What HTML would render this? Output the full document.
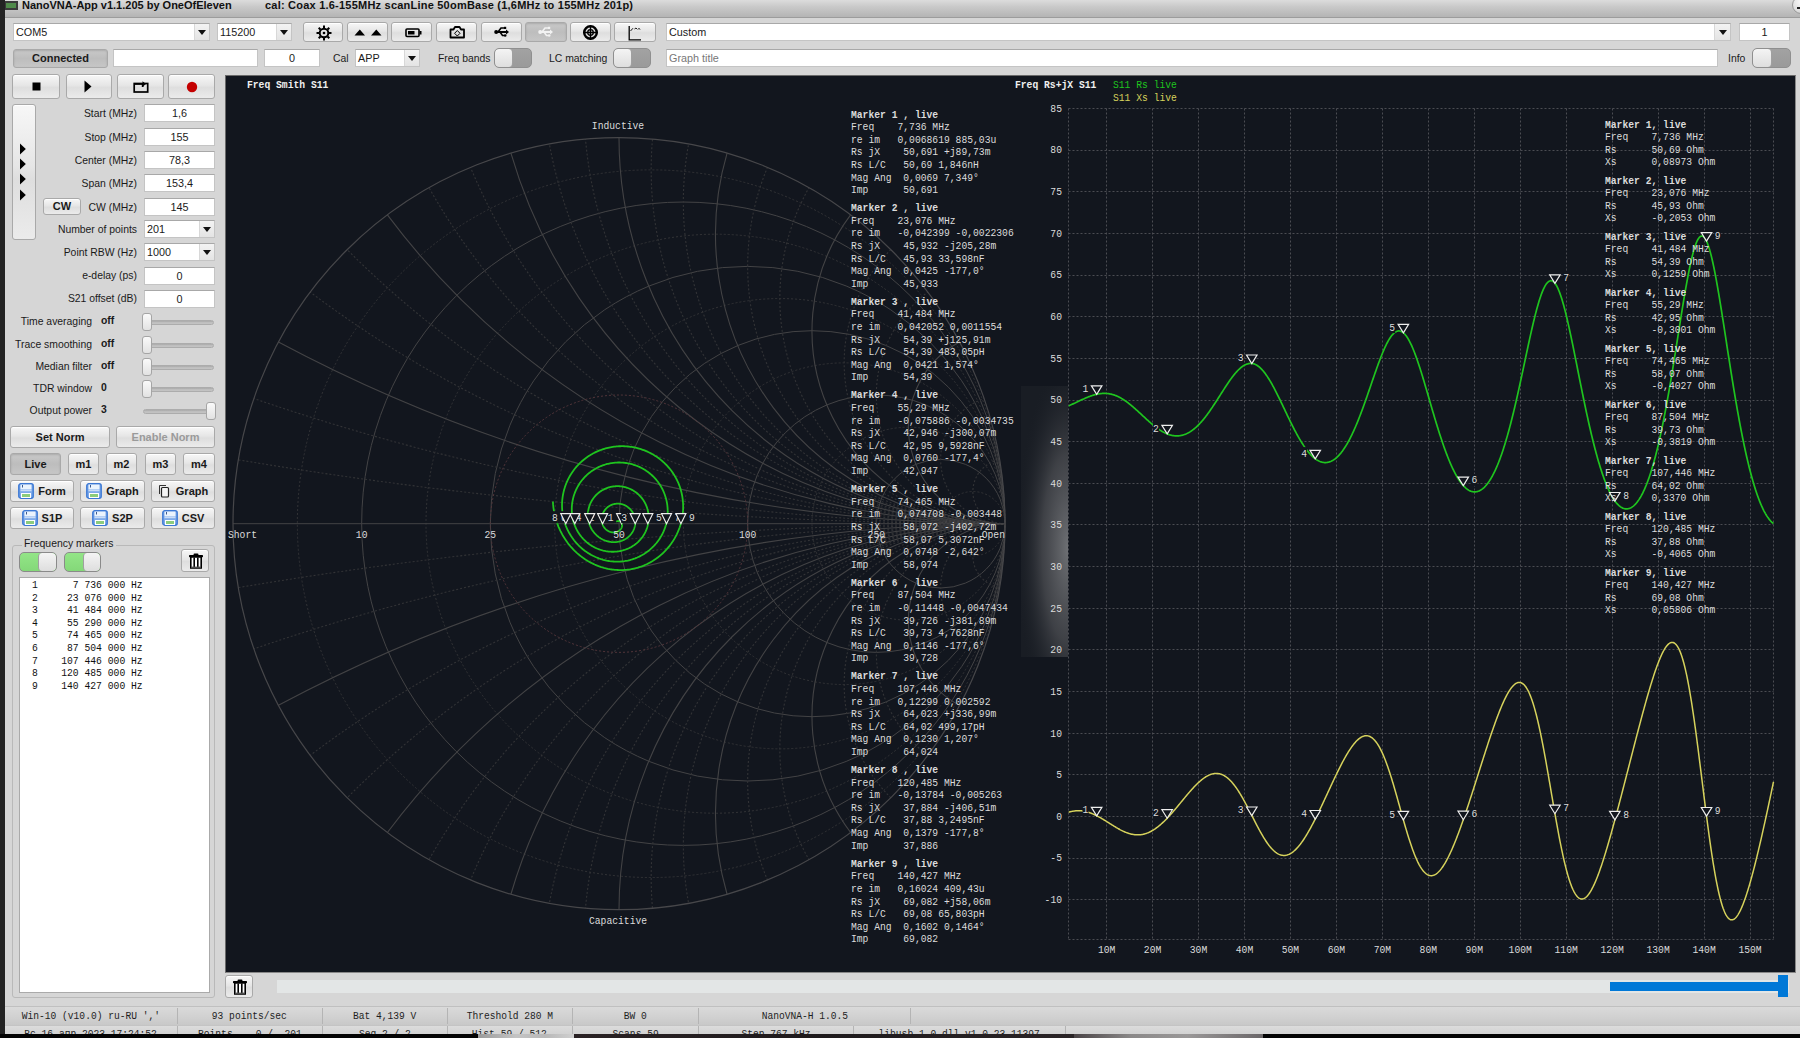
<!DOCTYPE html><html><head><meta charset="utf-8"><style>
*{box-sizing:border-box}
html,body{margin:0;padding:0;width:1800px;height:1038px;overflow:hidden;background:#d6d6d6;font-family:"Liberation Sans",sans-serif;font-size:11px;color:#1a1a1a}
.ab{position:absolute}
.fld{position:absolute;background:#fff;border:1px solid #c4c4c4;border-top-color:#a8a8a8;font-size:10.8px;line-height:16px;white-space:nowrap;overflow:hidden}
.btn{position:absolute;border:1px solid #a9a9a9;border-radius:3px;background:linear-gradient(#f7f7f7,#e6e6e6 45%,#dedede 55%,#ebebeb);box-shadow:inset 0 1px 0 #fff;text-align:center;font-weight:bold;font-size:11px;white-space:nowrap}
.btn.pr{background:linear-gradient(#c9c9c9,#bdbdbd 50%,#c6c6c6);box-shadow:inset 0 1px 2px rgba(0,0,0,.15)}
.lbl{position:absolute;white-space:nowrap;font-size:10.4px;line-height:13px}
.mono{font-family:"Liberation Mono",monospace}
.tg{position:absolute;border:1px solid #8f8f8f;border-radius:5px;background:linear-gradient(#a2a2a2,#9a9a9a);overflow:hidden}
.tg .k{position:absolute;left:0;top:0;bottom:0;width:50%;border-radius:4px;background:linear-gradient(#f4f4f4,#dedede);border-right:1px solid #a0a0a0}
.tg.on{background:linear-gradient(#93e587,#84d879);border-color:#8a8a8a}
.tg.on .k{left:auto;right:0;border-right:none;border-left:1px solid #a0a0a0}
.arr{position:absolute;top:0;bottom:0;border-left:1px solid #d8d8d8;background:linear-gradient(#f3f3f3,#e4e4e4)}
.arr:after{content:"";position:absolute;left:50%;top:50%;margin-left:-4px;margin-top:-2px;border-left:4px solid transparent;border-right:4px solid transparent;border-top:5px solid #111}
.sl{position:absolute;height:5px;border-radius:2.5px;background:linear-gradient(#a8a8a8,#bebebe 50%,#c4c4c4);border:1px solid #acacac}
.slh{position:absolute;width:10px;height:18px;border:1px solid #a5a5a5;border-radius:3px;background:linear-gradient(#fafafa,#e2e2e2)}
</style></head><body><div class="ab" style="left:0;top:0;width:5px;height:1038px;background:#232323"></div><div class="ab" style="left:5px;top:0;width:1795px;height:18px;background:linear-gradient(#dcdcdc,#c9c9c9 40%,#b4b4b4);border-bottom:1px solid #9c9c9c"></div><div class="ab" style="left:5px;top:1px;width:13px;height:9px;background:#4f8a4a;border:2px solid #3a3a3a;border-left-width:1px"></div><div class="lbl" style="left:22px;top:-1px;font-weight:bold;font-size:11px;line-height:13px;color:#111">NanoVNA-App v1.1.205 by OneOfEleven</div><div class="lbl" style="left:265px;top:-1px;font-weight:bold;font-size:11px;letter-spacing:0.22px;line-height:13px;color:#111">cal: Coax 1.6-155MHz scanLine 50omBase (1,6MHz to 155MHz 201p)</div><div class="ab" style="left:1792px;top:-4px;width:18px;height:18px;border-radius:9px;background:radial-gradient(circle at 50% 30%,#fafafa,#d0d0d0);border:1px solid #9a9a9a"></div><div class="ab" style="left:1797px;top:7px;width:4px;height:2px;background:#222"></div><div class="fld" style="left:13px;top:23px;width:197px;height:18px;padding:0 2px;line-height:16px">COM5<div class="arr" style="right:0;width:15px"></div></div><div class="fld" style="left:217px;top:23px;width:75px;height:18px;padding:0 2px;line-height:16px">115200<div class="arr" style="right:0;width:15px"></div></div><div class="btn " style="left:303px;top:22px;width:40px;height:20px;line-height:18px;font-weight:normal"></div><div class="btn " style="left:347px;top:22px;width:41px;height:20px;line-height:18px;font-weight:normal"></div><div class="btn " style="left:391px;top:22px;width:41px;height:20px;line-height:18px;font-weight:normal"></div><div class="btn " style="left:436px;top:22px;width:41px;height:20px;line-height:18px;font-weight:normal"></div><div class="btn " style="left:481px;top:22px;width:41px;height:20px;line-height:18px;font-weight:normal"></div><div class="btn pr" style="left:525px;top:22px;width:42px;height:20px;line-height:18px;font-weight:normal"></div><div class="btn " style="left:570px;top:22px;width:41px;height:20px;line-height:18px;font-weight:normal"></div><div class="btn " style="left:614px;top:22px;width:42px;height:20px;line-height:18px;font-weight:normal"></div><div class="fld" style="left:666px;top:23px;width:1065px;height:18px;padding:0 2px;line-height:16px">Custom<div class="arr" style="right:0;width:16px"></div></div><div class="fld " style="left:1739px;top:23px;width:51px;height:18px;text-align:center;padding:0 2px;line-height:16px;">1</div><div class="btn pr" style="left:13px;top:49px;width:95px;height:19px;line-height:17px;">Connected</div><div class="fld " style="left:113px;top:49px;width:145px;height:18px;text-align:center;padding:0 2px;line-height:16px;"></div><div class="fld " style="left:264px;top:49px;width:56px;height:18px;text-align:center;padding:0 2px;line-height:16px;">0</div><div class="lbl" style="left:333px;top:52px;">Cal</div><div class="fld" style="left:355px;top:49px;width:65px;height:18px;padding:0 2px;line-height:16px">APP<div class="arr" style="right:0;width:15px"></div></div><div class="lbl" style="left:438px;top:52px;">Freq bands</div><div class="tg " style="left:494px;top:48px;width:38px;height:20px"><div class="k"></div></div><div class="lbl" style="left:549px;top:52px;">LC matching</div><div class="tg " style="left:613px;top:48px;width:38px;height:20px"><div class="k"></div></div><div class="fld " style="left:666px;top:49px;width:1052px;height:18px;text-align:left;padding:0 2px;line-height:16px;color:#777">Graph title</div><div class="lbl" style="left:1728px;top:52px;">Info</div><div class="tg " style="left:1752px;top:48px;width:39px;height:20px"><div class="k"></div></div><div class="btn " style="left:12px;top:74px;width:48px;height:25px;line-height:23px;"></div><div class="btn " style="left:66px;top:74px;width:46px;height:25px;line-height:23px;"></div><div class="btn " style="left:117px;top:74px;width:47px;height:25px;line-height:23px;"></div><div class="btn " style="left:168px;top:74px;width:47px;height:25px;line-height:23px;"></div><div class="btn " style="left:12px;top:104px;width:24px;height:136px;line-height:134px;"></div><div class="lbl" style="right:1663px;top:107px;">Start (MHz)</div><div class="fld " style="left:144px;top:104px;width:71px;height:18px;text-align:center;padding:0 2px;line-height:16px;">1,6</div><div class="lbl" style="right:1663px;top:131px;">Stop (MHz)</div><div class="fld " style="left:144px;top:128px;width:71px;height:18px;text-align:center;padding:0 2px;line-height:16px;">155</div><div class="lbl" style="right:1663px;top:154px;">Center (MHz)</div><div class="fld " style="left:144px;top:151px;width:71px;height:18px;text-align:center;padding:0 2px;line-height:16px;">78,3</div><div class="lbl" style="right:1663px;top:177px;">Span (MHz)</div><div class="fld " style="left:144px;top:174px;width:71px;height:18px;text-align:center;padding:0 2px;line-height:16px;">153,4</div><div class="lbl" style="right:1663px;top:201px;">CW (MHz)</div><div class="fld " style="left:144px;top:198px;width:71px;height:18px;text-align:center;padding:0 2px;line-height:16px;">145</div><div class="btn " style="left:43px;top:198px;width:38px;height:17px;line-height:15px;">CW</div><div class="lbl" style="right:1663px;top:223px;">Number of points</div><div class="fld" style="left:144px;top:220px;width:71px;height:18px;padding:0 2px;line-height:16px">201<div class="arr" style="right:0;width:15px"></div></div><div class="lbl" style="right:1663px;top:246px;">Point RBW (Hz)</div><div class="fld" style="left:144px;top:243px;width:71px;height:18px;padding:0 2px;line-height:16px">1000<div class="arr" style="right:0;width:15px"></div></div><div class="lbl" style="right:1663px;top:269px;">e-delay (ps)</div><div class="fld " style="left:144px;top:267px;width:71px;height:18px;text-align:center;padding:0 2px;line-height:16px;">0</div><div class="lbl" style="right:1663px;top:292px;">S21 offset (dB)</div><div class="fld " style="left:144px;top:290px;width:71px;height:18px;text-align:center;padding:0 2px;line-height:16px;">0</div><div class="lbl" style="right:1708px;top:315px;">Time averaging</div><div class="lbl" style="left:101px;top:314px;font-weight:bold">off</div><div class="sl" style="left:143px;top:320px;width:71px"></div><div class="slh" style="left:142px;top:313px"></div><div class="lbl" style="right:1708px;top:338px;">Trace smoothing</div><div class="lbl" style="left:101px;top:337px;font-weight:bold">off</div><div class="sl" style="left:143px;top:343px;width:71px"></div><div class="slh" style="left:142px;top:336px"></div><div class="lbl" style="right:1708px;top:360px;">Median filter</div><div class="lbl" style="left:101px;top:359px;font-weight:bold">off</div><div class="sl" style="left:143px;top:365px;width:71px"></div><div class="slh" style="left:142px;top:358px"></div><div class="lbl" style="right:1708px;top:382px;">TDR window</div><div class="lbl" style="left:101px;top:381px;font-weight:bold">0</div><div class="sl" style="left:143px;top:387px;width:71px"></div><div class="slh" style="left:142px;top:380px"></div><div class="lbl" style="right:1708px;top:404px;">Output power</div><div class="lbl" style="left:101px;top:403px;font-weight:bold">3</div><div class="sl" style="left:143px;top:409px;width:71px"></div><div class="slh" style="left:206px;top:402px"></div><div class="btn " style="left:10px;top:426px;width:100px;height:22px;line-height:20px;">Set Norm</div><div class="btn " style="left:116px;top:426px;width:99px;height:22px;line-height:20px;color:#9a9a9a">Enable Norm</div><div class="btn pr" style="left:10px;top:453px;width:51px;height:22px;line-height:20px;">Live</div><div class="btn " style="left:68px;top:453px;width:31px;height:22px;line-height:20px;">m1</div><div class="btn " style="left:106px;top:453px;width:31px;height:22px;line-height:20px;">m2</div><div class="btn " style="left:145px;top:453px;width:31px;height:22px;line-height:20px;">m3</div><div class="btn " style="left:183px;top:453px;width:32px;height:22px;line-height:20px;">m4</div><div class="btn " style="left:10px;top:480px;width:64px;height:22px;line-height:20px;"><svg width="16" height="16" viewBox="0 0 16 16" style="vertical-align:middle;position:relative;top:-1px;margin-right:4px"><rect x="0.8" y="0.8" width="14.4" height="14.4" rx="2" fill="#7eaaea" stroke="#3b78d4" stroke-width="1.4"/><rect x="2.5" y="1.5" width="11" height="5" fill="#eaf3fd"/><rect x="4" y="2" width="1" height="2.5" fill="#3b5a90"/><rect x="2.5" y="7" width="11" height="1.2" fill="#c8dcf6"/><rect x="3" y="10" width="10" height="5" fill="#fff"/><rect x="4" y="11" width="8" height="3" fill="#8ccc7c"/></svg>Form</div><div class="btn " style="left:80px;top:480px;width:65px;height:22px;line-height:20px;"><svg width="16" height="16" viewBox="0 0 16 16" style="vertical-align:middle;position:relative;top:-1px;margin-right:4px"><rect x="0.8" y="0.8" width="14.4" height="14.4" rx="2" fill="#7eaaea" stroke="#3b78d4" stroke-width="1.4"/><rect x="2.5" y="1.5" width="11" height="5" fill="#eaf3fd"/><rect x="4" y="2" width="1" height="2.5" fill="#3b5a90"/><rect x="2.5" y="7" width="11" height="1.2" fill="#c8dcf6"/><rect x="3" y="10" width="10" height="5" fill="#fff"/><rect x="4" y="11" width="8" height="3" fill="#8ccc7c"/></svg>Graph</div><div class="btn " style="left:151px;top:480px;width:64px;height:22px;line-height:20px;"><svg width="12" height="14" viewBox="0 0 12 14" style="vertical-align:middle;position:relative;top:-1px;margin-right:6px"><path d="M1.5,10 V1.5 H8" fill="none" stroke="#333" stroke-width="1"/><rect x="3.5" y="3.5" width="7" height="9.5" rx="1" fill="#f4f4f4" stroke="#222" stroke-width="1.2"/></svg>Graph</div><div class="btn " style="left:10px;top:507px;width:64px;height:22px;line-height:20px;"><svg width="16" height="16" viewBox="0 0 16 16" style="vertical-align:middle;position:relative;top:-1px;margin-right:4px"><rect x="0.8" y="0.8" width="14.4" height="14.4" rx="2" fill="#7eaaea" stroke="#3b78d4" stroke-width="1.4"/><rect x="2.5" y="1.5" width="11" height="5" fill="#eaf3fd"/><rect x="4" y="2" width="1" height="2.5" fill="#3b5a90"/><rect x="2.5" y="7" width="11" height="1.2" fill="#c8dcf6"/><rect x="3" y="10" width="10" height="5" fill="#fff"/><rect x="4" y="11" width="8" height="3" fill="#8ccc7c"/></svg>S1P</div><div class="btn " style="left:80px;top:507px;width:65px;height:22px;line-height:20px;"><svg width="16" height="16" viewBox="0 0 16 16" style="vertical-align:middle;position:relative;top:-1px;margin-right:4px"><rect x="0.8" y="0.8" width="14.4" height="14.4" rx="2" fill="#7eaaea" stroke="#3b78d4" stroke-width="1.4"/><rect x="2.5" y="1.5" width="11" height="5" fill="#eaf3fd"/><rect x="4" y="2" width="1" height="2.5" fill="#3b5a90"/><rect x="2.5" y="7" width="11" height="1.2" fill="#c8dcf6"/><rect x="3" y="10" width="10" height="5" fill="#fff"/><rect x="4" y="11" width="8" height="3" fill="#8ccc7c"/></svg>S2P</div><div class="btn " style="left:151px;top:507px;width:64px;height:22px;line-height:20px;"><svg width="16" height="16" viewBox="0 0 16 16" style="vertical-align:middle;position:relative;top:-1px;margin-right:4px"><rect x="0.8" y="0.8" width="14.4" height="14.4" rx="2" fill="#7eaaea" stroke="#3b78d4" stroke-width="1.4"/><rect x="2.5" y="1.5" width="11" height="5" fill="#eaf3fd"/><rect x="4" y="2" width="1" height="2.5" fill="#3b5a90"/><rect x="2.5" y="7" width="11" height="1.2" fill="#c8dcf6"/><rect x="3" y="10" width="10" height="5" fill="#fff"/><rect x="4" y="11" width="8" height="3" fill="#8ccc7c"/></svg>CSV</div><div class="ab" style="left:12px;top:545px;width:203px;height:453px;border:1px solid #b9b9b9;border-radius:3px"></div><div class="lbl" style="left:22px;top:537px;padding:0 2px;background:#d6d6d6">Frequency markers</div><div class="tg on" style="left:19px;top:552px;width:38px;height:20px"><div class="k"></div></div><div class="tg on" style="left:64px;top:552px;width:37px;height:20px"><div class="k"></div></div><div class="btn " style="left:181px;top:549px;width:28px;height:23px;line-height:21px;"><div style="position:absolute;left:6px;top:3px;line-height:0"><svg width="16" height="16" viewBox="0 0 16 16"><rect x="5.5" y="0.5" width="5" height="2" rx="1" fill="#000"/><rect x="1" y="2" width="14" height="2.2" rx="0.6" fill="#000"/><path d="M2.8,4 H13.2 V15 H2.8Z" fill="#fff" stroke="#000" stroke-width="1.6"/><path d="M6.2,4.5 V14.5 M9.8,4.5 V14.5" stroke="#000" stroke-width="1.6"/><path d="M3,14.2 H13" stroke="#555" stroke-width="1.2"/></svg></div></div><div class="ab" style="left:19px;top:577px;width:191px;height:416px;background:#fff;border:1px solid #aaa"></div><div style="position:absolute;left:32px;top:579.0px;font-family:'Liberation Mono',monospace;font-size:11.1px;line-height:12.6px;white-space:pre;color:#111;transform:scaleX(0.875);transform-origin:0 50%">1      7 736 000 Hz</div><div style="position:absolute;left:32px;top:591.6px;font-family:'Liberation Mono',monospace;font-size:11.1px;line-height:12.6px;white-space:pre;color:#111;transform:scaleX(0.875);transform-origin:0 50%">2     23 076 000 Hz</div><div style="position:absolute;left:32px;top:604.2px;font-family:'Liberation Mono',monospace;font-size:11.1px;line-height:12.6px;white-space:pre;color:#111;transform:scaleX(0.875);transform-origin:0 50%">3     41 484 000 Hz</div><div style="position:absolute;left:32px;top:616.8px;font-family:'Liberation Mono',monospace;font-size:11.1px;line-height:12.6px;white-space:pre;color:#111;transform:scaleX(0.875);transform-origin:0 50%">4     55 290 000 Hz</div><div style="position:absolute;left:32px;top:629.4px;font-family:'Liberation Mono',monospace;font-size:11.1px;line-height:12.6px;white-space:pre;color:#111;transform:scaleX(0.875);transform-origin:0 50%">5     74 465 000 Hz</div><div style="position:absolute;left:32px;top:642.0px;font-family:'Liberation Mono',monospace;font-size:11.1px;line-height:12.6px;white-space:pre;color:#111;transform:scaleX(0.875);transform-origin:0 50%">6     87 504 000 Hz</div><div style="position:absolute;left:32px;top:654.6px;font-family:'Liberation Mono',monospace;font-size:11.1px;line-height:12.6px;white-space:pre;color:#111;transform:scaleX(0.875);transform-origin:0 50%">7    107 446 000 Hz</div><div style="position:absolute;left:32px;top:667.2px;font-family:'Liberation Mono',monospace;font-size:11.1px;line-height:12.6px;white-space:pre;color:#111;transform:scaleX(0.875);transform-origin:0 50%">8    120 485 000 Hz</div><div style="position:absolute;left:32px;top:679.8px;font-family:'Liberation Mono',monospace;font-size:11.1px;line-height:12.6px;white-space:pre;color:#111;transform:scaleX(0.875);transform-origin:0 50%">9    140 427 000 Hz</div><svg class="ab" style="left:315.5px;top:25px" width="16" height="16" viewBox="0 0 16 16"><line x1="13.00" y1="8.00" x2="15.50" y2="8.00" stroke="#000" stroke-width="2"/><line x1="11.54" y1="11.54" x2="13.30" y2="13.30" stroke="#000" stroke-width="2"/><line x1="8.00" y1="13.00" x2="8.00" y2="15.50" stroke="#000" stroke-width="2"/><line x1="4.46" y1="11.54" x2="2.70" y2="13.30" stroke="#000" stroke-width="2"/><line x1="3.00" y1="8.00" x2="0.50" y2="8.00" stroke="#000" stroke-width="2"/><line x1="4.46" y1="4.46" x2="2.70" y2="2.70" stroke="#000" stroke-width="2"/><line x1="8.00" y1="3.00" x2="8.00" y2="0.50" stroke="#000" stroke-width="2"/><line x1="11.54" y1="4.46" x2="13.30" y2="2.70" stroke="#000" stroke-width="2"/><circle cx="8" cy="8" r="4.3" fill="none" stroke="#000" stroke-width="2"/><circle cx="8" cy="8" r="1.3" fill="#000"/></svg><svg class="ab" style="left:354px;top:28px" width="30" height="8" viewBox="0 0 30 8"><path d="M0.5,7.5 L5.8,1.5 L11,7.5Z M17,7.5 L22.3,1.5 L27.5,7.5Z" fill="#000"/></svg><svg class="ab" style="left:405px;top:28px" width="18" height="10" viewBox="0 0 18 10"><rect x="1" y="1" width="13" height="7.5" rx="1" fill="none" stroke="#000" stroke-width="1.6"/><rect x="3" y="3" width="6.5" height="3.5" fill="#000"/><rect x="14.5" y="3" width="2" height="3.5" fill="#000"/></svg><svg class="ab" style="left:449px;top:25px" width="17" height="14" viewBox="0 0 17 14"><path d="M1.5,4.5 H4.5 L6,2 H10.5 L12,4.5 H15 V12.5 H1.5Z" fill="none" stroke="#000" stroke-width="1.8" stroke-linejoin="round"/><path d="M8.3,5.5 L11,8.3 L8.3,11 L5.6,8.3Z" fill="none" stroke="#000" stroke-width="1"/></svg><svg class="ab" style="left:494px;top:25px" width="16" height="14" viewBox="0 0 16 14"><path d="M1,7 H13" stroke="#000" stroke-width="2"/><circle cx="2.2" cy="7" r="2" fill="#000"/><path d="M4,7 L7,3 H10" fill="none" stroke="#000" stroke-width="1.6"/><path d="M6,7 L8.5,10.5 H10.5" fill="none" stroke="#000" stroke-width="1.6"/><path d="M12,4.5 L15,7 L12,9.5Z" fill="#000"/><rect x="10" y="1.8" width="2.2" height="2.2" fill="#000"/><circle cx="11.2" cy="10.5" r="1.3" fill="#000"/></svg><svg class="ab" style="left:538px;top:25px" width="16" height="14" viewBox="0 0 16 14"><path d="M1,7 H13" stroke="#f2f2f2" stroke-width="2"/><circle cx="2.2" cy="7" r="2" fill="#f2f2f2"/><path d="M4,7 L7,3 H10" fill="none" stroke="#f2f2f2" stroke-width="1.6"/><path d="M6,7 L8.5,10.5 H10.5" fill="none" stroke="#f2f2f2" stroke-width="1.6"/><path d="M12,4.5 L15,7 L12,9.5Z" fill="#f2f2f2"/><rect x="10" y="1.8" width="2.2" height="2.2" fill="#f2f2f2"/><circle cx="11.2" cy="10.5" r="1.3" fill="#f2f2f2"/></svg><svg class="ab" style="left:582px;top:24px" width="17" height="17" viewBox="0 0 17 17"><circle cx="8.5" cy="8.5" r="6.3" fill="none" stroke="#000" stroke-width="2.4"/><circle cx="8.5" cy="8.5" r="2.8" fill="none" stroke="#000" stroke-width="1.3"/><path d="M8.5,1 V16 M1,8.5 H16" stroke="#000" stroke-width="1.4"/></svg><svg class="ab" style="left:627px;top:25px" width="16" height="16" viewBox="0 0 16 16"><path d="M2.2,1 V14.8 H14" fill="none" stroke="#000" stroke-width="1.3"/><path d="M3.5,6 L6,3.2 M7.5,4 L9,3 L10,4 M10.8,4.6 L12,3.3 L13,4.6" fill="none" stroke="#000" stroke-width="0.9"/></svg><svg class="ab" style="left:32px;top:82px" width="9" height="9" viewBox="0 0 9 9"><rect x="0.5" y="0.5" width="8" height="8" fill="#000"/></svg><svg class="ab" style="left:84px;top:80px" width="8" height="13" viewBox="0 0 8 13"><path d="M0.5,0.5 L7.5,6.5 L0.5,12.5Z" fill="#000"/></svg><svg class="ab" style="left:133px;top:81px" width="16" height="12" viewBox="0 0 16 12"><rect x="1.2" y="2.5" width="13.5" height="8.5" fill="none" stroke="#000" stroke-width="1.7"/><path d="M1,3 H10" stroke="#000" stroke-width="1.7"/><path d="M9.5,0.3 L13,3 L9.5,5.7Z" fill="#000"/><rect x="8.8" y="3" width="1.8" height="3" fill="#000"/></svg><svg class="ab" style="left:186px;top:81px" width="12" height="12" viewBox="0 0 12 12"><circle cx="6" cy="6" r="5.2" fill="#c40000"/></svg><svg class="ab" style="left:19px;top:143px" width="8" height="12" viewBox="0 0 8 12"><path d="M1,0.5 L6.8,6 L1,11.5Z" fill="#000"/></svg><svg class="ab" style="left:19px;top:158px" width="8" height="12" viewBox="0 0 8 12"><path d="M1,0.5 L6.8,6 L1,11.5Z" fill="#000"/></svg><svg class="ab" style="left:19px;top:173px" width="8" height="12" viewBox="0 0 8 12"><path d="M1,0.5 L6.8,6 L1,11.5Z" fill="#000"/></svg><svg class="ab" style="left:19px;top:189px" width="8" height="12" viewBox="0 0 8 12"><path d="M1,0.5 L6.8,6 L1,11.5Z" fill="#000"/></svg><div class="ab" style="left:225px;top:75px;width:1571px;height:898px;background:#12161e;border:1px solid #6a6a6a;border-right-color:#888;border-bottom-color:#888"></div><div class="btn " style="left:225px;top:975px;width:28px;height:23px;line-height:21px;"><div style="position:absolute;left:6px;top:3px;line-height:0"><svg width="16" height="16" viewBox="0 0 16 16"><rect x="5.5" y="0.5" width="5" height="2" rx="1" fill="#000"/><rect x="1" y="2" width="14" height="2.2" rx="0.6" fill="#000"/><path d="M2.8,4 H13.2 V15 H2.8Z" fill="#fff" stroke="#000" stroke-width="1.6"/><path d="M6.2,4.5 V14.5 M9.8,4.5 V14.5" stroke="#000" stroke-width="1.6"/><path d="M3,14.2 H13" stroke="#555" stroke-width="1.2"/></svg></div></div><div class="ab" style="left:277px;top:980px;width:1512px;height:13px;background:#e3e6e6"></div><div class="ab" style="left:1610px;top:982px;width:170px;height:9px;background:#0078d7"></div><div class="ab" style="left:1778px;top:975px;width:10px;height:22px;background:#0078d7"></div><div class="ab" style="left:5px;top:1006px;width:1795px;height:19px;background:linear-gradient(#dadada,#d0d0d0 60%,#c8c8c8);border-top:1px solid #c0c0c0"></div><div class="ab" style="left:5px;top:1025px;width:1795px;height:9px;background:linear-gradient(#dcdcdc,#d2d2d2);border-top:1px solid #c4c4c4"></div><div class="ab mono" style="left:5px;top:1008px;width:172.5px;height:16px;text-align:center;font-size:11.1px;line-height:16px;color:#1e1e1e;border-right:1px solid #b4b4b4;white-space:pre"><span style="display:inline-block;transform:scaleX(0.865)">Win-10 (v10.0) ru-RU ','</span></div><div class="ab mono" style="left:177.5px;top:1008px;width:145.0px;height:16px;text-align:center;font-size:11.1px;line-height:16px;color:#1e1e1e;border-right:1px solid #b4b4b4;white-space:pre"><span style="display:inline-block;transform:scaleX(0.865)">93 points/sec</span></div><div class="ab mono" style="left:322.5px;top:1008px;width:125.0px;height:16px;text-align:center;font-size:11.1px;line-height:16px;color:#1e1e1e;border-right:1px solid #b4b4b4;white-space:pre"><span style="display:inline-block;transform:scaleX(0.865)">Bat 4,139 V</span></div><div class="ab mono" style="left:447.5px;top:1008px;width:125.5px;height:16px;text-align:center;font-size:11.1px;line-height:16px;color:#1e1e1e;border-right:1px solid #b4b4b4;white-space:pre"><span style="display:inline-block;transform:scaleX(0.865)">Threshold 280 M</span></div><div class="ab mono" style="left:573px;top:1008px;width:126px;height:16px;text-align:center;font-size:11.1px;line-height:16px;color:#1e1e1e;border-right:1px solid #b4b4b4;white-space:pre"><span style="display:inline-block;transform:scaleX(0.865)">BW 0</span></div><div class="ab mono" style="left:699px;top:1008px;width:212px;height:16px;text-align:center;font-size:11.1px;line-height:16px;color:#1e1e1e;border-right:1px solid #b4b4b4;white-space:pre"><span style="display:inline-block;transform:scaleX(0.865)">NanoVNA-H 1.0.5</span></div><div class="ab mono" style="left:5px;top:1026px;width:172.5px;height:8px;text-align:center;font-size:11.1px;line-height:16px;color:#1e1e1e;border-right:1px solid #b4b4b4;white-space:pre;overflow:hidden"><span style="display:inline-block;transform:scaleX(0.865)">Вс 16 апр 2023 17:24:52</span></div><div class="ab mono" style="left:177.5px;top:1026px;width:145.0px;height:8px;text-align:center;font-size:11.1px;line-height:16px;color:#1e1e1e;border-right:1px solid #b4b4b4;white-space:pre;overflow:hidden"><span style="display:inline-block;transform:scaleX(0.865)">Points    0 /  201</span></div><div class="ab mono" style="left:322.5px;top:1026px;width:125.0px;height:8px;text-align:center;font-size:11.1px;line-height:16px;color:#1e1e1e;border-right:1px solid #b4b4b4;white-space:pre;overflow:hidden"><span style="display:inline-block;transform:scaleX(0.865)">Seg 2 / 2</span></div><div class="ab mono" style="left:447.5px;top:1026px;width:125.5px;height:8px;text-align:center;font-size:11.1px;line-height:16px;color:#1e1e1e;border-right:1px solid #b4b4b4;white-space:pre;overflow:hidden"><span style="display:inline-block;transform:scaleX(0.865)">Hist 59 / 512</span></div><div class="ab mono" style="left:573px;top:1026px;width:126px;height:8px;text-align:center;font-size:11.1px;line-height:16px;color:#1e1e1e;border-right:1px solid #b4b4b4;white-space:pre;overflow:hidden"><span style="display:inline-block;transform:scaleX(0.865)">Scans 59</span></div><div class="ab mono" style="left:699px;top:1026px;width:155px;height:8px;text-align:center;font-size:11.1px;line-height:16px;color:#1e1e1e;border-right:1px solid #b4b4b4;white-space:pre;overflow:hidden"><span style="display:inline-block;transform:scaleX(0.865)">Step 767 kHz</span></div><div class="ab mono" style="left:854px;top:1026px;width:212px;height:8px;text-align:center;font-size:11.1px;line-height:16px;color:#1e1e1e;border-right:1px solid #b4b4b4;white-space:pre;overflow:hidden"><span style="display:inline-block;transform:scaleX(0.865)">libusb 1.0.dll v1.0.23.11397</span></div><div class="ab" style="left:0;top:1034px;width:1800px;height:4px;background:#030303"></div><div class="ab" style="left:478px;top:1034px;width:96px;height:4px;background:linear-gradient(90deg,#9a9a9a,#c4c4c4 40%,#b8b8b8 70%,#d0d0d0)"></div><div class="ab" style="left:574px;top:1034px;width:500px;height:4px;background:linear-gradient(90deg,#2a2224,#1e1a1c 50%,#2a2426)"></div><div class="ab" style="left:1074px;top:1034px;width:189px;height:4px;background:linear-gradient(90deg,#4a4446,#8a8888 30%,#9a9898 60%,#6a6668)"></div><svg class="ab" style="left:226px;top:76px" width="1569" height="896" viewBox="226 76 1569 896" font-family="Liberation Mono, monospace"><circle cx="651.17" cy="523.70" r="353.83" fill="none" stroke="#323336" stroke-width="1" stroke-dasharray="2 2"/><circle cx="683.33" cy="523.70" r="321.67" fill="none" stroke="#434345" stroke-width="1" /><circle cx="715.50" cy="523.70" r="289.50" fill="none" stroke="#323336" stroke-width="1" stroke-dasharray="2 2"/><circle cx="747.67" cy="523.70" r="257.33" fill="none" stroke="#434345" stroke-width="1" /><circle cx="779.83" cy="523.70" r="225.17" fill="none" stroke="#323336" stroke-width="1" stroke-dasharray="2 2"/><circle cx="812.00" cy="523.70" r="193.00" fill="none" stroke="#434345" stroke-width="1" /><circle cx="844.17" cy="523.70" r="160.83" fill="none" stroke="#323336" stroke-width="1" stroke-dasharray="2 2"/><circle cx="876.33" cy="523.70" r="128.67" fill="none" stroke="#434345" stroke-width="1" /><circle cx="908.50" cy="523.70" r="96.50" fill="none" stroke="#323336" stroke-width="1" stroke-dasharray="2 2"/><circle cx="940.67" cy="523.70" r="64.33" fill="none" stroke="#434345" stroke-width="1" /><circle cx="972.83" cy="523.70" r="32.17" fill="none" stroke="#323336" stroke-width="1" stroke-dasharray="2 2"/><path d="M1005.00,523.70 A4632.00,4632.00 0 0 1 238.32,459.81" fill="none" stroke="#323336" stroke-width="1.1" stroke-dasharray="2 2"/><path d="M1005.00,523.70 A4632.00,4632.00 0 0 0 238.32,587.59" fill="none" stroke="#323336" stroke-width="1.1" stroke-dasharray="2 2"/><path d="M1005.00,523.70 A2316.00,2316.00 0 0 1 253.86,398.51" fill="none" stroke="#323336" stroke-width="1.1" stroke-dasharray="2 2"/><path d="M1005.00,523.70 A2316.00,2316.00 0 0 0 253.86,648.89" fill="none" stroke="#323336" stroke-width="1.1" stroke-dasharray="2 2"/><path d="M1005.00,523.70 A1544.00,1544.00 0 0 1 278.41,342.05" fill="none" stroke="#434345" stroke-width="1.1" /><path d="M1005.00,523.70 A1544.00,1544.00 0 0 0 278.41,705.35" fill="none" stroke="#434345" stroke-width="1.1" /><path d="M1005.00,523.70 A1158.00,1158.00 0 0 1 310.20,292.10" fill="none" stroke="#323336" stroke-width="1.1" stroke-dasharray="2 2"/><path d="M1005.00,523.70 A1158.00,1158.00 0 0 0 310.20,755.30" fill="none" stroke="#323336" stroke-width="1.1" stroke-dasharray="2 2"/><path d="M1005.00,523.70 A926.40,926.40 0 0 1 347.20,249.62" fill="none" stroke="#323336" stroke-width="1.1" stroke-dasharray="2 2"/><path d="M1005.00,523.70 A926.40,926.40 0 0 0 347.20,797.78" fill="none" stroke="#323336" stroke-width="1.1" stroke-dasharray="2 2"/><path d="M1005.00,523.70 A772.00,772.00 0 0 1 387.40,214.90" fill="none" stroke="#434345" stroke-width="1.1" /><path d="M1005.00,523.70 A772.00,772.00 0 0 0 387.40,832.50" fill="none" stroke="#434345" stroke-width="1.1" /><path d="M1005.00,523.70 A661.71,661.71 0 0 1 429.00,187.70" fill="none" stroke="#323336" stroke-width="1.1" stroke-dasharray="2 2"/><path d="M1005.00,523.70 A661.71,661.71 0 0 0 429.00,859.70" fill="none" stroke="#323336" stroke-width="1.1" stroke-dasharray="2 2"/><path d="M1005.00,523.70 A579.00,579.00 0 0 1 470.54,167.39" fill="none" stroke="#323336" stroke-width="1.1" stroke-dasharray="2 2"/><path d="M1005.00,523.70 A579.00,579.00 0 0 0 470.54,880.01" fill="none" stroke="#323336" stroke-width="1.1" stroke-dasharray="2 2"/><path d="M1005.00,523.70 A514.67,514.67 0 0 1 510.92,153.14" fill="none" stroke="#434345" stroke-width="1.1" /><path d="M1005.00,523.70 A514.67,514.67 0 0 0 510.92,894.26" fill="none" stroke="#434345" stroke-width="1.1" /><path d="M1005.00,523.70 A463.20,463.20 0 0 1 549.39,144.03" fill="none" stroke="#323336" stroke-width="1.1" stroke-dasharray="2 2"/><path d="M1005.00,523.70 A463.20,463.20 0 0 0 549.39,903.37" fill="none" stroke="#323336" stroke-width="1.1" stroke-dasharray="2 2"/><path d="M1005.00,523.70 A421.09,421.09 0 0 1 585.50,139.16" fill="none" stroke="#323336" stroke-width="1.1" stroke-dasharray="2 2"/><path d="M1005.00,523.70 A421.09,421.09 0 0 0 585.50,908.24" fill="none" stroke="#323336" stroke-width="1.1" stroke-dasharray="2 2"/><path d="M1005.00,523.70 A386.00,386.00 0 0 1 619.00,137.70" fill="none" stroke="#434345" stroke-width="1.1" /><path d="M1005.00,523.70 A386.00,386.00 0 0 0 619.00,909.70" fill="none" stroke="#434345" stroke-width="1.1" /><path d="M1005.00,523.70 A353.83,353.83 0 0 1 652.50,139.16" fill="none" stroke="#323336" stroke-width="1.1" stroke-dasharray="2 2"/><path d="M1005.00,523.70 A353.83,353.83 0 0 0 652.50,908.24" fill="none" stroke="#323336" stroke-width="1.1" stroke-dasharray="2 2"/><path d="M1005.00,523.70 A321.67,321.67 0 0 1 688.61,144.03" fill="none" stroke="#323336" stroke-width="1.1" stroke-dasharray="2 2"/><path d="M1005.00,523.70 A321.67,321.67 0 0 0 688.61,903.37" fill="none" stroke="#323336" stroke-width="1.1" stroke-dasharray="2 2"/><path d="M1005.00,523.70 A289.50,289.50 0 0 1 727.08,153.14" fill="none" stroke="#434345" stroke-width="1.1" /><path d="M1005.00,523.70 A289.50,289.50 0 0 0 727.08,894.26" fill="none" stroke="#434345" stroke-width="1.1" /><path d="M1005.00,523.70 A257.33,257.33 0 0 1 767.46,167.39" fill="none" stroke="#323336" stroke-width="1.1" stroke-dasharray="2 2"/><path d="M1005.00,523.70 A257.33,257.33 0 0 0 767.46,880.01" fill="none" stroke="#323336" stroke-width="1.1" stroke-dasharray="2 2"/><path d="M1005.00,523.70 A225.17,225.17 0 0 1 809.00,187.70" fill="none" stroke="#323336" stroke-width="1.1" stroke-dasharray="2 2"/><path d="M1005.00,523.70 A225.17,225.17 0 0 0 809.00,859.70" fill="none" stroke="#323336" stroke-width="1.1" stroke-dasharray="2 2"/><path d="M1005.00,523.70 A193.00,193.00 0 0 1 850.60,214.90" fill="none" stroke="#434345" stroke-width="1.1" /><path d="M1005.00,523.70 A193.00,193.00 0 0 0 850.60,832.50" fill="none" stroke="#434345" stroke-width="1.1" /><path d="M1005.00,523.70 A160.83,160.83 0 0 1 890.80,249.62" fill="none" stroke="#323336" stroke-width="1.1" stroke-dasharray="2 2"/><path d="M1005.00,523.70 A160.83,160.83 0 0 0 890.80,797.78" fill="none" stroke="#323336" stroke-width="1.1" stroke-dasharray="2 2"/><path d="M1005.00,523.70 A128.67,128.67 0 0 1 927.80,292.10" fill="none" stroke="#323336" stroke-width="1.1" stroke-dasharray="2 2"/><path d="M1005.00,523.70 A128.67,128.67 0 0 0 927.80,755.30" fill="none" stroke="#323336" stroke-width="1.1" stroke-dasharray="2 2"/><path d="M1005.00,523.70 A96.50,96.50 0 0 1 959.59,342.05" fill="none" stroke="#434345" stroke-width="1.1" /><path d="M1005.00,523.70 A96.50,96.50 0 0 0 959.59,705.35" fill="none" stroke="#434345" stroke-width="1.1" /><path d="M1005.00,523.70 A64.33,64.33 0 0 1 984.14,398.51" fill="none" stroke="#323336" stroke-width="1.1" stroke-dasharray="2 2"/><path d="M1005.00,523.70 A64.33,64.33 0 0 0 984.14,648.89" fill="none" stroke="#323336" stroke-width="1.1" stroke-dasharray="2 2"/><path d="M1005.00,523.70 A32.17,32.17 0 0 1 999.68,459.81" fill="none" stroke="#323336" stroke-width="1.1" stroke-dasharray="2 2"/><path d="M1005.00,523.70 A32.17,32.17 0 0 0 999.68,587.59" fill="none" stroke="#323336" stroke-width="1.1" stroke-dasharray="2 2"/><line x1="233.0" y1="523.7" x2="1005.0" y2="523.7" stroke="#434345" stroke-width="1"/><circle cx="619.0" cy="523.7" r="386.0" fill="none" stroke="#47474a" stroke-width="1.2"/><circle cx="619.0" cy="523.7" r="128.67" fill="none" stroke="#53353a" stroke-width="1" stroke-dasharray="2 2"/><polyline points="616.27,521.68 616.38,521.62 616.48,521.56 616.59,521.50 616.69,521.45 616.80,521.40 616.91,521.35 617.02,521.30 617.13,521.26 617.24,521.22 617.35,521.18 617.46,521.15 617.57,521.12 617.68,521.09 617.79,521.07 617.90,521.05 618.01,521.03 618.12,521.02 618.23,521.01 618.34,521.01 618.46,521.00 618.57,521.01 618.68,521.01 618.78,521.03 618.89,521.04 619.00,521.06 619.11,521.08 619.22,521.11 619.32,521.14 619.43,521.17 619.53,521.21 619.63,521.25 619.74,521.30 619.84,521.35 619.94,521.40 620.03,521.46 620.13,521.52 620.23,521.58 620.32,521.65 620.41,521.72 620.50,521.79 620.59,521.87 620.68,521.95 620.76,522.03 620.84,522.12 620.92,522.21 621.00,522.30 621.08,522.40 621.15,522.49 621.22,522.59 621.29,522.70 621.36,522.80 621.42,522.91 621.48,523.02 621.54,523.13 621.60,523.25 621.65,523.36 621.70,523.48 621.75,523.60 621.79,523.72 621.84,523.85 621.87,523.98 621.91,524.10 621.94,524.23 621.97,524.36 621.99,524.50 622.02,524.63 622.03,524.77 622.05,524.90 622.06,525.04 622.07,525.18 622.07,525.32 622.07,525.46 622.07,525.60 622.06,525.74 622.05,525.89 622.04,526.03 622.02,526.18 622.00,526.32 621.97,526.47 621.94,526.61 621.90,526.76 621.86,526.90 621.82,527.05 621.78,527.20 621.73,527.34 621.67,527.49 621.61,527.63 621.55,527.78 621.48,527.92 621.41,528.07 621.34,528.21 621.26,528.35 621.18,528.49 621.09,528.63 621.00,528.77 620.90,528.91 620.80,529.05 620.70,529.18 620.60,529.32 620.49,529.45 620.37,529.58 620.25,529.71 620.13,529.84 620.01,529.96 619.88,530.09 619.74,530.21 619.61,530.33 619.47,530.44 619.32,530.56 619.18,530.67 619.02,530.78 618.87,530.88 618.71,530.99 618.55,531.09 618.39,531.19 618.22,531.28 618.05,531.37 617.88,531.46 617.70,531.55 617.52,531.63 617.34,531.71 617.15,531.78 616.96,531.85 616.77,531.92 616.58,531.99 616.38,532.05 616.19,532.10 615.99,532.15 615.78,532.20 615.58,532.25 615.37,532.29 615.16,532.32 614.95,532.35 614.74,532.38 614.52,532.40 614.31,532.42 614.09,532.43 613.87,532.44 613.65,532.45 613.43,532.45 613.20,532.44 612.98,532.43 612.76,532.41 612.53,532.39 612.30,532.37 612.08,532.34 611.85,532.31 611.62,532.27 611.40,532.22 611.17,532.17 610.94,532.12 610.71,532.06 610.48,531.99 610.26,531.92 610.03,531.84 609.80,531.76 609.58,531.68 609.35,531.59 609.13,531.49 608.91,531.39 608.69,531.28 608.47,531.17 608.25,531.05 608.03,530.93 607.81,530.80 607.60,530.67 607.39,530.53 607.18,530.39 606.97,530.24 606.77,530.09 606.56,529.93 606.36,529.77 606.17,529.60 605.97,529.43 605.78,529.26 605.59,529.07 605.40,528.89 605.22,528.70 605.04,528.50 604.87,528.30 604.69,528.09 604.53,527.88 604.36,527.67 604.20,527.45 604.04,527.23 603.89,527.00 603.74,526.77 603.60,526.54 603.46,526.30 603.33,526.06 603.20,525.81 603.07,525.56 602.95,525.31 602.83,525.05 602.72,524.79 602.62,524.52 602.52,524.26 602.42,523.99 602.34,523.71 602.25,523.44 602.17,523.16 602.10,522.88 602.03,522.59 601.97,522.31 601.92,522.02 601.87,521.72 601.83,521.43 601.79,521.14 601.76,520.84 601.73,520.54 601.71,520.24 601.70,519.94 601.69,519.64 601.69,519.33 601.69,519.03 601.70,518.72 601.72,518.41 601.75,518.11 601.78,517.80 601.81,517.49 601.85,517.18 601.90,516.88 601.96,516.57 602.02,516.26 602.09,515.95 602.16,515.65 602.25,515.34 602.33,515.03 602.43,514.73 602.53,514.43 602.64,514.13 602.75,513.83 602.87,513.53 603.00,513.23 603.13,512.93 603.27,512.64 603.41,512.35 603.56,512.06 603.72,511.78 603.89,511.49 604.06,511.21 604.23,510.94 604.42,510.66 604.60,510.39 604.80,510.12 605.00,509.86 605.21,509.60 605.42,509.34 605.64,509.09 605.86,508.84 606.09,508.60 606.33,508.36 606.57,508.12 606.81,507.89 607.06,507.67 607.32,507.45 607.58,507.23 607.85,507.02 608.12,506.82 608.39,506.62 608.67,506.42 608.96,506.23 609.25,506.05 609.54,505.87 609.84,505.70 610.14,505.54 610.45,505.38 610.76,505.23 611.07,505.08 611.39,504.94 611.71,504.81 612.04,504.68 612.37,504.56 612.70,504.45 613.03,504.35 613.37,504.25 613.71,504.16 614.05,504.07 614.39,504.00 614.74,503.93 615.09,503.87 615.44,503.81 615.79,503.77 616.14,503.73 616.50,503.70 616.85,503.67 617.21,503.66 617.57,503.65 617.93,503.65 618.29,503.66 618.65,503.67 619.01,503.70 619.37,503.73 619.73,503.77 620.09,503.82 620.45,503.87 620.81,503.94 621.17,504.01 621.53,504.09 621.88,504.18 622.24,504.27 622.59,504.38 622.94,504.49 623.30,504.61 623.64,504.73 623.99,504.87 624.33,505.01 624.68,505.17 625.02,505.33 625.35,505.49 625.68,505.67 626.01,505.85 626.34,506.04 626.66,506.24 626.98,506.44 627.30,506.66 627.61,506.87 627.92,507.10 628.22,507.34 628.52,507.58 628.82,507.83 629.11,508.08 629.39,508.34 629.67,508.61 629.94,508.89 630.21,509.17 630.48,509.46 630.73,509.75 630.99,510.05 631.23,510.36 631.47,510.67 631.71,510.99 631.93,511.32 632.15,511.65 632.37,511.98 632.58,512.32 632.78,512.67 632.97,513.02 633.16,513.38 633.33,513.74 633.51,514.10 633.67,514.47 633.83,514.85 633.98,515.22 634.12,515.61 634.25,515.99 634.38,516.38 634.49,516.77 634.60,517.17 634.70,517.57 634.80,517.97 634.88,518.37 634.96,518.78 635.03,519.19 635.09,519.60 635.14,520.01 635.18,520.43 635.21,520.84 635.24,521.26 635.25,521.68 635.26,522.10 635.26,522.52 635.25,522.94 635.23,523.36 635.20,523.79 635.16,524.21 635.11,524.63 635.05,525.05 634.98,525.47 634.90,525.89 634.81,526.31 634.71,526.73 634.60,527.14 634.48,527.56 634.35,527.97 634.21,528.38 634.07,528.79 633.91,529.20 633.74,529.60 633.56,530.00 633.38,530.40 633.18,530.79 632.98,531.18 632.76,531.57 632.54,531.95 632.31,532.33 632.06,532.70 631.81,533.07 631.55,533.44 631.28,533.80 631.01,534.15 630.72,534.50 630.43,534.84 630.12,535.18 629.81,535.52 629.49,535.84 629.17,536.16 628.83,536.48 628.49,536.78 628.14,537.08 627.78,537.38 627.41,537.66 627.04,537.94 626.66,538.21 626.27,538.48 625.88,538.73 625.47,538.98 625.07,539.22 624.65,539.45 624.23,539.67 623.81,539.89 623.38,540.09 622.94,540.29 622.50,540.48 622.05,540.66 621.60,540.83 621.14,540.99 620.67,541.14 620.21,541.28 619.74,541.41 619.26,541.53 618.78,541.64 618.30,541.74 617.81,541.83 617.32,541.91 616.83,541.98 616.33,542.04 615.83,542.08 615.33,542.12 614.83,542.15 614.33,542.16 613.82,542.17 613.31,542.16 612.80,542.15 612.29,542.12 611.78,542.08 611.27,542.03 610.76,541.97 610.24,541.90 609.73,541.81 609.22,541.72 608.71,541.61 608.20,541.50 607.69,541.37 607.19,541.23 606.68,541.08 606.18,540.92 605.67,540.75 605.18,540.57 604.68,540.37 604.19,540.17 603.69,539.95 603.21,539.73 602.72,539.49 602.24,539.25 601.77,538.99 601.30,538.72 600.83,538.44 600.37,538.15 599.91,537.85 599.46,537.55 599.01,537.23 598.57,536.90 598.14,536.56 597.71,536.21 597.29,535.86 596.87,535.49 596.47,535.11 596.06,534.73 595.67,534.33 595.28,533.93 594.91,533.52 594.53,533.10 594.17,532.67 593.82,532.24 593.47,531.79 593.14,531.34 592.81,530.88 592.49,530.41 592.18,529.94 591.88,529.46 591.59,528.97 591.31,528.48 591.04,527.98 590.78,527.47 590.53,526.96 590.29,526.44 590.06,525.92 589.84,525.39 589.64,524.85 589.44,524.31 589.26,523.77 589.09,523.22 588.92,522.67 588.77,522.12 588.63,521.56 588.51,520.99 588.39,520.43 588.29,519.86 588.20,519.29 588.12,518.71 588.05,518.13 587.99,517.56 587.95,516.98 587.92,516.39 587.90,515.81 587.89,515.23 587.89,514.64 587.91,514.05 587.94,513.47 587.98,512.88 588.03,512.30 588.09,511.71 588.17,511.13 588.26,510.54 588.36,509.96 588.47,509.38 588.60,508.80 588.73,508.22 588.88,507.65 589.05,507.08 589.22,506.51 589.41,505.94 589.60,505.38 589.81,504.82 590.03,504.26 590.27,503.71 590.51,503.16 590.77,502.62 591.04,502.08 591.32,501.54 591.61,501.02 591.92,500.49 592.23,499.98 592.56,499.47 592.89,498.96 593.24,498.46 593.60,497.97 593.97,497.49 594.35,497.01 594.74,496.54 595.14,496.08 595.56,495.63 595.98,495.18 596.41,494.75 596.85,494.32 597.30,493.90 597.76,493.49 598.23,493.09 598.71,492.69 599.20,492.31 599.69,491.94 600.20,491.58 600.71,491.23 601.23,490.88 601.76,490.55 602.30,490.23 602.84,489.92 603.39,489.63 603.95,489.34 604.52,489.07 605.09,488.80 605.67,488.55 606.25,488.31 606.84,488.08 607.44,487.87 608.04,487.67 608.64,487.48 609.25,487.30 609.87,487.13 610.49,486.98 611.11,486.84 611.74,486.72 612.37,486.60 613.00,486.50 613.64,486.42 614.28,486.34 614.92,486.28 615.57,486.24 616.21,486.21 616.86,486.19 617.51,486.18 618.16,486.19 618.81,486.22 619.46,486.25 620.11,486.30 620.76,486.37 621.41,486.45 622.06,486.54 622.70,486.64 623.35,486.76 623.99,486.90 624.64,487.05 625.28,487.21 625.91,487.38 626.55,487.57 627.18,487.78 627.80,487.99 628.43,488.22 629.04,488.47 629.66,488.72 630.27,489.00 630.87,489.28 631.47,489.58 632.06,489.89 632.65,490.21 633.23,490.55 633.80,490.90 634.37,491.26 634.93,491.63 635.48,492.02 636.03,492.42 636.56,492.83 637.09,493.26 637.61,493.69 638.12,494.14 638.62,494.60 639.12,495.07 639.60,495.55 640.07,496.04 640.53,496.54 640.98,497.05 641.42,497.58 641.85,498.11 642.27,498.65 642.68,499.21 643.08,499.77 643.46,500.34 643.83,500.92 644.19,501.51 644.54,502.11 644.87,502.71 645.19,503.33 645.50,503.95 645.80,504.58 646.08,505.21 646.35,505.86 646.60,506.51 646.84,507.16 647.06,507.82 647.28,508.49 647.47,509.16 647.65,509.84 647.82,510.52 647.97,511.21 648.11,511.90 648.23,512.59 648.34,513.29 648.43,513.99 648.51,514.70 648.57,515.40 648.61,516.11 648.64,516.82 648.66,517.53 648.66,518.25 648.64,518.96 648.60,519.68 648.55,520.39 648.49,521.10 648.41,521.82 648.31,522.53 648.19,523.24 648.06,523.95 647.92,524.66 647.76,525.37 647.58,526.07 647.39,526.77 647.18,527.47 646.95,528.16 646.71,528.85 646.46,529.53 646.19,530.21 645.90,530.89 645.60,531.56 645.28,532.22 644.95,532.88 644.60,533.53 644.24,534.17 643.86,534.81 643.47,535.44 643.06,536.06 642.64,536.68 642.21,537.29 641.76,537.88 641.29,538.47 640.81,539.05 640.32,539.62 639.82,540.18 639.30,540.73 638.77,541.27 638.22,541.80 637.67,542.32 637.10,542.83 636.52,543.33 635.92,543.81 635.32,544.28 634.70,544.74 634.07,545.19 633.43,545.62 632.78,546.04 632.12,546.45 631.45,546.85 630.77,547.23 630.08,547.59 629.38,547.95 628.67,548.28 627.96,548.61 627.23,548.92 626.50,549.21 625.75,549.49 625.01,549.75 624.25,550.00 623.49,550.23 622.72,550.45 621.94,550.65 621.16,550.83 620.37,551.00 619.58,551.15 618.79,551.29 617.99,551.41 617.18,551.51 616.37,551.59 615.56,551.66 614.75,551.71 613.93,551.75 613.11,551.77 612.29,551.77 611.47,551.75 610.64,551.71 609.82,551.66 608.99,551.59 608.17,551.51 607.35,551.40 606.52,551.28 605.70,551.14 604.88,550.98 604.06,550.81 603.25,550.62 602.44,550.41 601.63,550.18 600.82,549.94 600.02,549.68 599.22,549.40 598.43,549.11 597.64,548.79 596.86,548.46 596.08,548.12 595.31,547.76 594.55,547.38 593.79,546.98 593.04,546.57 592.30,546.14 591.57,545.70 590.85,545.23 590.13,544.76 589.42,544.27 588.72,543.76 588.04,543.24 587.36,542.70 586.69,542.15 586.04,541.58 585.39,541.00 584.76,540.40 584.14,539.79 583.53,539.17 582.93,538.53 582.35,537.88 581.77,537.22 581.22,536.54 580.67,535.85 580.14,535.15 579.62,534.44 579.12,533.71 578.64,532.98 578.16,532.23 577.71,531.47 577.27,530.70 576.84,529.93 576.43,529.14 576.04,528.34 575.66,527.53 575.30,526.72 574.96,525.90 574.63,525.06 574.32,524.22 574.03,523.38 573.75,522.52 573.49,521.66 573.25,520.80 573.03,519.92 572.83,519.05 572.64,518.16 572.47,517.27 572.32,516.38 572.19,515.48 572.08,514.58 571.98,513.68 571.90,512.77 571.84,511.86 571.80,510.95 571.78,510.03 571.78,509.12 571.79,508.20 571.82,507.28 571.87,506.37 571.94,505.45 572.03,504.53 572.14,503.61 572.26,502.70 572.40,501.78 572.56,500.87 572.74,499.96 572.94,499.05 573.16,498.15 573.39,497.25 573.64,496.35 573.91,495.46 574.20,494.57 574.51,493.68 574.83,492.80 575.17,491.93 575.53,491.07 575.91,490.21 576.30,489.35 576.72,488.51 577.15,487.67 577.59,486.84 578.06,486.02 578.54,485.20 579.04,484.40 579.55,483.61 580.08,482.82 580.63,482.05 581.19,481.28 581.77,480.53 582.37,479.79 582.98,479.06 583.61,478.34 584.25,477.63 584.90,476.94 585.58,476.26 586.26,475.59 586.96,474.93 587.67,474.29 588.40,473.67 589.14,473.05 589.90,472.46 590.66,471.87 591.44,471.31 592.23,470.76 593.04,470.22 593.85,469.70 594.68,469.20 595.51,468.71 596.36,468.24 597.22,467.79 598.09,467.35 598.96,466.93 599.85,466.53 600.75,466.15 601.65,465.79 602.56,465.44 603.48,465.11 604.41,464.80 605.35,464.51 606.29,464.24 607.24,463.99 608.19,463.76 609.15,463.55 610.11,463.35 611.08,463.18 612.06,463.02 613.03,462.89 614.02,462.78 615.00,462.68 615.99,462.61 616.97,462.56 617.96,462.52 618.96,462.51 619.95,462.52 620.94,462.55 621.94,462.59 622.93,462.66 623.92,462.75 624.91,462.86 625.90,462.99 626.89,463.14 627.87,463.32 628.85,463.51 629.83,463.72 630.81,463.95 631.78,464.20 632.74,464.47 633.70,464.77 634.66,465.08 635.61,465.41 636.55,465.76 637.49,466.13 638.41,466.52 639.33,466.93 640.25,467.36 641.15,467.81 642.04,468.27 642.93,468.76 643.81,469.26 644.67,469.78 645.52,470.32 646.37,470.88 647.20,471.46 648.02,472.05 648.83,472.66 649.62,473.29 650.41,473.94 651.17,474.60 651.93,475.28 652.67,475.97 653.40,476.68 654.11,477.41 654.81,478.15 655.49,478.91 656.15,479.68 656.80,480.46 657.43,481.26 658.05,482.08 658.65,482.90 659.23,483.74 659.80,484.59 660.35,485.46 660.87,486.33 661.39,487.22 661.88,488.12 662.35,489.03 662.81,489.95 663.24,490.88 663.66,491.82 664.05,492.77 664.43,493.73 664.79,494.70 665.13,495.67 665.44,496.65 665.74,497.64 666.02,498.64 666.27,499.64 666.51,500.65 666.72,501.66 666.91,502.68 667.09,503.70 667.24,504.73 667.37,505.76 667.48,506.79 667.56,507.83 667.63,508.87 667.68,509.91 667.70,510.95 667.70,512.00 667.69,513.04 667.65,514.08 667.59,515.13 667.50,516.17 667.40,517.21 667.27,518.25 667.13,519.29 666.96,520.32 666.76,521.35 666.55,522.38 666.31,523.41 666.05,524.43 665.76,525.44 665.45,526.45 665.12,527.45 664.77,528.45 664.40,529.44 664.00,530.43 663.59,531.40 663.15,532.37 662.69,533.33 662.21,534.28 661.70,535.23 661.18,536.16 660.64,537.08 660.07,537.99 659.49,538.89 658.89,539.78 658.27,540.65 657.63,541.52 656.97,542.37 656.29,543.21 655.59,544.03 654.87,544.84 654.14,545.64 653.39,546.42 652.62,547.18 651.84,547.93 651.04,548.66 650.22,549.38 649.39,550.08 648.54,550.76 647.68,551.43 646.80,552.08 645.91,552.71 645.01,553.32 644.09,553.91 643.15,554.48 642.21,555.04 641.25,555.57 640.28,556.08 639.30,556.57 638.30,557.04 637.30,557.49 636.28,557.92 635.26,558.33 634.22,558.71 633.18,559.07 632.13,559.41 631.06,559.73 629.99,560.02 628.92,560.29 627.83,560.54 626.74,560.76 625.65,560.96 624.54,561.14 623.44,561.28 622.32,561.41 621.21,561.51 620.09,561.59 618.96,561.64 617.84,561.66 616.71,561.67 615.58,561.64 614.44,561.60 613.31,561.52 612.18,561.43 611.05,561.30 609.92,561.16 608.79,560.99 607.66,560.79 606.53,560.57 605.41,560.32 604.29,560.05 603.18,559.76 602.07,559.44 600.96,559.10 599.86,558.73 598.77,558.34 597.68,557.92 596.60,557.48 595.53,557.02 594.47,556.53 593.41,556.03 592.37,555.49 591.33,554.94 590.31,554.36 589.30,553.76 588.29,553.14 587.30,552.50 586.33,551.83 585.36,551.15 584.41,550.44 583.47,549.71 582.55,548.97 581.64,548.20 580.75,547.41 579.87,546.61 579.01,545.78 578.17,544.94 577.35,544.08 576.54,543.20 575.75,542.30 574.97,541.39 574.22,540.46 573.49,539.51 572.78,538.55 572.08,537.58 571.41,536.58 570.76,535.58 570.13,534.56 569.52,533.53 568.93,532.49 568.37,531.43 567.83,530.36 567.31,529.28 566.81,528.19 566.34,527.09 565.89,525.98 565.47,524.86 565.07,523.74 564.69,522.60 564.34,521.46 564.02,520.31 563.71,519.16 563.44,518.00 563.18,516.83 562.96,515.66 562.75,514.48 562.58,513.30 562.42,512.12 562.30,510.93 562.19,509.74 562.11,508.55 562.06,507.35 562.03,506.16 562.03,504.96 562.05,503.77 562.09,502.57 562.16,501.38 562.26,500.19 562.37,499.00 562.52,497.81 562.68,496.62 562.87,495.44 563.09,494.26 563.33,493.09 563.59,491.92 563.87,490.75 564.18,489.59 564.52,488.44 564.87,487.29 565.25,486.15 565.66,485.02 566.09,483.89 566.54,482.78 567.01,481.67 567.51,480.57 568.02,479.49 568.57,478.41 569.13,477.34 569.71,476.29 570.32,475.24 570.95,474.21 571.60,473.19 572.27,472.19 572.97,471.20 573.68,470.22 574.41,469.25 575.17,468.30 575.94,467.37 576.73,466.45 577.55,465.54 578.38,464.66 579.23,463.79 580.10,462.93 580.99,462.10 581.89,461.28 582.81,460.48 583.75,459.70 584.71,458.94 585.68,458.19 586.67,457.47 587.68,456.76 588.70,456.08 589.73,455.42 590.78,454.78 591.84,454.16 592.92,453.56 594.00,452.98 595.11,452.42 596.22,451.89 597.35,451.38 598.48,450.89 599.63,450.42 600.79,449.98 601.96,449.56 603.13,449.17 604.32,448.80 605.51,448.45 606.72,448.13 607.93,447.83 609.15,447.56 610.37,447.31 611.60,447.09 612.83,446.89 614.07,446.71 615.32,446.57 616.57,446.44 617.82,446.35 619.07,446.27 620.33,446.23 621.59,446.21 622.85,446.21 624.11,446.24 625.37,446.30 626.63,446.38 627.88,446.49 629.14,446.62 630.40,446.78 631.65,446.97 632.90,447.18 634.14,447.41 635.38,447.68 636.62,447.96 637.85,448.28 639.07,448.61 640.29,448.98 641.50,449.36 642.70,449.78 643.90,450.21 645.09,450.67 646.26,451.16 647.43,451.67 648.59,452.20 649.73,452.76 650.87,453.34 651.99,453.95 653.10,454.58 654.20,455.23 655.28,455.90 656.35,456.60 657.40,457.31 658.44,458.06 659.47,458.82 660.47,459.60 661.47,460.41 662.44,461.23 663.40,462.08 664.33,462.94 665.25,463.83 666.16,464.74 667.04,465.66 667.90,466.60 668.74,467.57 669.56,468.54 670.36,469.54 671.14,470.56 671.90,471.59 672.64,472.63 673.35,473.70 674.04,474.78 674.71,475.87 675.35,476.98 675.97,478.10 676.57,479.23 677.14,480.38 677.69,481.54 678.21,482.71 678.71,483.90 679.18,485.09 679.63,486.30 680.05,487.52 680.44,488.74 680.81,489.98 681.15,491.22 681.47,492.47 681.76,493.73 682.02,494.99 682.26,496.26 682.47,497.54 682.65,498.82 682.80,500.11 682.93,501.40 683.03,502.69 683.10,503.99 683.14,505.29 683.16,506.59 683.15,507.89 683.11,509.20 683.05,510.50 682.95,511.80 682.83,513.11 682.69,514.41 682.51,515.70 682.31,517.00 682.08,518.29 681.82,519.58 681.54,520.87 681.23,522.15 680.89,523.42 680.52,524.69 680.13,525.95 679.71,527.21 679.26,528.45 678.79,529.69 678.29,530.92 677.77,532.15 677.22,533.36 676.65,534.56 676.05,535.75 675.42,536.92 674.77,538.09 674.10,539.24 673.40,540.38 672.68,541.51 671.93,542.62 671.16,543.71 670.37,544.79 669.56,545.86 668.72,546.90 667.86,547.93 666.98,548.95 666.08,549.94 665.16,550.92 664.22,551.87 663.25,552.81 662.27,553.73 661.27,554.62 660.25,555.50 659.21,556.35 658.15,557.18 657.08,557.99 655.99,558.78 654.88,559.54 653.75,560.28 652.61,561.00 651.46,561.69 650.29,562.36 649.10,563.00 647.90,563.62 646.69,564.21 645.46,564.77 644.22,565.31 642.97,565.82 641.71,566.30 640.44,566.75 639.15,567.18 637.86,567.58 636.56,567.95 635.24,568.29 633.92,568.60 632.60,568.88 631.26,569.14 629.92,569.36 628.57,569.55 627.21,569.72 625.85,569.85 624.49,569.95 623.12,570.03 621.75,570.07 620.38,570.08 619.01,570.06 617.63,570.01 616.25,569.93 614.87,569.82 613.50,569.68 612.12,569.51 610.75,569.30 609.38,569.07 608.01,568.81 606.64,568.51 605.28,568.19 603.92,567.83 602.57,567.44 601.23,567.03 599.89,566.58 598.56,566.11 597.24,565.60 595.92,565.06 594.62,564.50 593.32,563.90 592.04,563.28 590.77,562.63 589.50,561.94 588.25,561.23 587.02,560.49 585.79,559.73 584.59,558.93 583.39,558.11 582.21,557.26 581.05,556.39 579.90,555.49 578.77,554.56 577.66,553.61 576.56,552.63 575.49,551.62 574.43,550.60 573.39,549.54 572.38,548.47 571.38,547.37 570.40,546.25 569.45,545.10 568.52,543.94 567.61,542.75 566.73,541.54 565.87,540.31 565.03,539.06 564.22,537.80 563.43,536.51 562.66,535.21 561.93,533.88 561.22,532.54 560.53,531.19 559.88,529.82 559.25,528.43 558.64,527.03 558.07,525.61 557.52,524.18 557.01,522.74 556.52,521.29 556.06,519.82 555.63,518.35 555.23,516.86 554.86,515.36 554.52,513.86 554.21,512.35 553.93,510.83 553.68,509.30 553.46,507.77 553.28,506.23 553.12,504.68 553.00,503.14 552.90,501.59" fill="none" stroke="#1fc41f" stroke-width="1.8"/><text transform="translate(247.00 88.00) scale(0.8739 1)" fill="#f0f0f0" font-size="11.1" font-weight="bold" text-anchor="start" xml:space="preserve">Freq Smith S11</text><text transform="translate(618.00 129.00) scale(0.8739 1)" fill="#dcdcdc" font-size="11.1"  text-anchor="middle" xml:space="preserve">Inductive</text><text transform="translate(618.00 924.00) scale(0.8739 1)" fill="#dcdcdc" font-size="11.1"  text-anchor="middle" xml:space="preserve">Capacitive</text><text transform="translate(228.00 538.00) scale(0.8739 1)" fill="#dcdcdc" font-size="11.1"  text-anchor="start" xml:space="preserve">Short</text><text transform="translate(1005.00 538.00) scale(0.8739 1)" fill="#dcdcdc" font-size="11.1"  text-anchor="end" xml:space="preserve">Open</text><text transform="translate(361.67 538.00) scale(0.8739 1)" fill="#dcdcdc" font-size="11.1"  text-anchor="middle" xml:space="preserve">10</text><text transform="translate(490.33 538.00) scale(0.8739 1)" fill="#dcdcdc" font-size="11.1"  text-anchor="middle" xml:space="preserve">25</text><text transform="translate(619.00 538.00) scale(0.8739 1)" fill="#dcdcdc" font-size="11.1"  text-anchor="middle" xml:space="preserve">50</text><text transform="translate(747.67 538.00) scale(0.8739 1)" fill="#dcdcdc" font-size="11.1"  text-anchor="middle" xml:space="preserve">100</text><text transform="translate(876.33 538.00) scale(0.8739 1)" fill="#dcdcdc" font-size="11.1"  text-anchor="middle" xml:space="preserve">250</text><path d="M616.6,513.7 L626.6,513.7 L621.6,523.7 Z" fill="#12161e" stroke="#eeeeee" stroke-width="1.2" stroke-linejoin="miter"/><rect x="607.6" y="511.2" width="6" height="12" fill="#12161e"/><text transform="translate(610.65 520.60) scale(0.8739 1)" fill="#dcdcdc" font-size="11.1"  text-anchor="middle" xml:space="preserve">1</text><path d="M597.6,513.7 L607.6,513.7 L602.6,523.7 Z" fill="#12161e" stroke="#eeeeee" stroke-width="1.2" stroke-linejoin="miter"/><rect x="588.6" y="511.2" width="6" height="12" fill="#12161e"/><text transform="translate(591.63 520.60) scale(0.8739 1)" fill="#dcdcdc" font-size="11.1"  text-anchor="middle" xml:space="preserve">2</text><path d="M630.2,513.7 L640.2,513.7 L635.2,523.7 Z" fill="#12161e" stroke="#eeeeee" stroke-width="1.2" stroke-linejoin="miter"/><rect x="621.2" y="511.2" width="6" height="12" fill="#12161e"/><text transform="translate(624.23 520.60) scale(0.8739 1)" fill="#dcdcdc" font-size="11.1"  text-anchor="middle" xml:space="preserve">3</text><path d="M584.7,513.7 L594.7,513.7 L589.7,523.7 Z" fill="#12161e" stroke="#eeeeee" stroke-width="1.2" stroke-linejoin="miter"/><rect x="575.7" y="511.2" width="6" height="12" fill="#12161e"/><text transform="translate(578.71 520.60) scale(0.8739 1)" fill="#dcdcdc" font-size="11.1"  text-anchor="middle" xml:space="preserve">4</text><path d="M642.8,513.7 L652.8,513.7 L647.8,523.7 Z" fill="#12161e" stroke="#eeeeee" stroke-width="1.2" stroke-linejoin="miter"/><rect x="655.8" y="511.2" width="6" height="12" fill="#12161e"/><text transform="translate(658.84 520.60) scale(0.8739 1)" fill="#dcdcdc" font-size="11.1"  text-anchor="middle" xml:space="preserve">5</text><path d="M569.8,513.7 L579.8,513.7 L574.8,523.7 Z" fill="#12161e" stroke="#eeeeee" stroke-width="1.2" stroke-linejoin="miter"/><rect x="560.8" y="511.2" width="6" height="12" fill="#12161e"/><text transform="translate(563.81 520.60) scale(0.8739 1)" fill="#dcdcdc" font-size="11.1"  text-anchor="middle" xml:space="preserve">6</text><path d="M661.5,513.7 L671.5,513.7 L666.5,523.7 Z" fill="#12161e" stroke="#eeeeee" stroke-width="1.2" stroke-linejoin="miter"/><rect x="674.5" y="511.2" width="6" height="12" fill="#12161e"/><text transform="translate(677.47 520.60) scale(0.8739 1)" fill="#dcdcdc" font-size="11.1"  text-anchor="middle" xml:space="preserve">7</text><path d="M560.8,513.7 L570.8,513.7 L565.8,523.7 Z" fill="#12161e" stroke="#eeeeee" stroke-width="1.2" stroke-linejoin="miter"/><rect x="551.8" y="511.2" width="6" height="12" fill="#12161e"/><text transform="translate(554.79 520.60) scale(0.8739 1)" fill="#dcdcdc" font-size="11.1"  text-anchor="middle" xml:space="preserve">8</text><path d="M675.9,513.7 L685.9,513.7 L680.9,523.7 Z" fill="#12161e" stroke="#eeeeee" stroke-width="1.2" stroke-linejoin="miter"/><rect x="688.9" y="511.2" width="6" height="12" fill="#12161e"/><text transform="translate(691.85 520.60) scale(0.8739 1)" fill="#dcdcdc" font-size="11.1"  text-anchor="middle" xml:space="preserve">9</text><text transform="translate(851.00 117.50) scale(0.8739 1)" fill="#dcdcdc" font-size="11.1" font-weight="bold" text-anchor="start" xml:space="preserve">Marker 1 , live</text><text transform="translate(851.00 130.10) scale(0.8739 1)" fill="#dcdcdc" font-size="11.1"  text-anchor="start" xml:space="preserve">Freq    7,736 MHz</text><text transform="translate(851.00 142.70) scale(0.8739 1)" fill="#dcdcdc" font-size="11.1"  text-anchor="start" xml:space="preserve">re im   0,0068619 885,03u</text><text transform="translate(851.00 155.30) scale(0.8739 1)" fill="#dcdcdc" font-size="11.1"  text-anchor="start" xml:space="preserve">Rs jX    50,691 +j89,73m</text><text transform="translate(851.00 167.90) scale(0.8739 1)" fill="#dcdcdc" font-size="11.1"  text-anchor="start" xml:space="preserve">Rs L/C   50,69 1,846nH</text><text transform="translate(851.00 180.50) scale(0.8739 1)" fill="#dcdcdc" font-size="11.1"  text-anchor="start" xml:space="preserve">Mag Ang  0,0069 7,349°</text><text transform="translate(851.00 193.10) scale(0.8739 1)" fill="#dcdcdc" font-size="11.1"  text-anchor="start" xml:space="preserve">Imp      50,691</text><text transform="translate(851.00 211.15) scale(0.8739 1)" fill="#dcdcdc" font-size="11.1" font-weight="bold" text-anchor="start" xml:space="preserve">Marker 2 , live</text><text transform="translate(851.00 223.75) scale(0.8739 1)" fill="#dcdcdc" font-size="11.1"  text-anchor="start" xml:space="preserve">Freq    23,076 MHz</text><text transform="translate(851.00 236.35) scale(0.8739 1)" fill="#dcdcdc" font-size="11.1"  text-anchor="start" xml:space="preserve">re im   -0,042399 -0,0022306</text><text transform="translate(851.00 248.95) scale(0.8739 1)" fill="#dcdcdc" font-size="11.1"  text-anchor="start" xml:space="preserve">Rs jX    45,932 -j205,28m</text><text transform="translate(851.00 261.55) scale(0.8739 1)" fill="#dcdcdc" font-size="11.1"  text-anchor="start" xml:space="preserve">Rs L/C   45,93 33,598nF</text><text transform="translate(851.00 274.15) scale(0.8739 1)" fill="#dcdcdc" font-size="11.1"  text-anchor="start" xml:space="preserve">Mag Ang  0,0425 -177,0°</text><text transform="translate(851.00 286.75) scale(0.8739 1)" fill="#dcdcdc" font-size="11.1"  text-anchor="start" xml:space="preserve">Imp      45,933</text><text transform="translate(851.00 304.80) scale(0.8739 1)" fill="#dcdcdc" font-size="11.1" font-weight="bold" text-anchor="start" xml:space="preserve">Marker 3 , live</text><text transform="translate(851.00 317.40) scale(0.8739 1)" fill="#dcdcdc" font-size="11.1"  text-anchor="start" xml:space="preserve">Freq    41,484 MHz</text><text transform="translate(851.00 330.00) scale(0.8739 1)" fill="#dcdcdc" font-size="11.1"  text-anchor="start" xml:space="preserve">re im   0,042052 0,0011554</text><text transform="translate(851.00 342.60) scale(0.8739 1)" fill="#dcdcdc" font-size="11.1"  text-anchor="start" xml:space="preserve">Rs jX    54,39 +j125,91m</text><text transform="translate(851.00 355.20) scale(0.8739 1)" fill="#dcdcdc" font-size="11.1"  text-anchor="start" xml:space="preserve">Rs L/C   54,39 483,05pH</text><text transform="translate(851.00 367.80) scale(0.8739 1)" fill="#dcdcdc" font-size="11.1"  text-anchor="start" xml:space="preserve">Mag Ang  0,0421 1,574°</text><text transform="translate(851.00 380.40) scale(0.8739 1)" fill="#dcdcdc" font-size="11.1"  text-anchor="start" xml:space="preserve">Imp      54,39</text><text transform="translate(851.00 398.45) scale(0.8739 1)" fill="#dcdcdc" font-size="11.1" font-weight="bold" text-anchor="start" xml:space="preserve">Marker 4 , live</text><text transform="translate(851.00 411.05) scale(0.8739 1)" fill="#dcdcdc" font-size="11.1"  text-anchor="start" xml:space="preserve">Freq    55,29 MHz</text><text transform="translate(851.00 423.65) scale(0.8739 1)" fill="#dcdcdc" font-size="11.1"  text-anchor="start" xml:space="preserve">re im   -0,075886 -0,0034735</text><text transform="translate(851.00 436.25) scale(0.8739 1)" fill="#dcdcdc" font-size="11.1"  text-anchor="start" xml:space="preserve">Rs jX    42,946 -j300,07m</text><text transform="translate(851.00 448.85) scale(0.8739 1)" fill="#dcdcdc" font-size="11.1"  text-anchor="start" xml:space="preserve">Rs L/C   42,95 9,5928nF</text><text transform="translate(851.00 461.45) scale(0.8739 1)" fill="#dcdcdc" font-size="11.1"  text-anchor="start" xml:space="preserve">Mag Ang  0,0760 -177,4°</text><text transform="translate(851.00 474.05) scale(0.8739 1)" fill="#dcdcdc" font-size="11.1"  text-anchor="start" xml:space="preserve">Imp      42,947</text><text transform="translate(851.00 492.10) scale(0.8739 1)" fill="#dcdcdc" font-size="11.1" font-weight="bold" text-anchor="start" xml:space="preserve">Marker 5 , live</text><text transform="translate(851.00 504.70) scale(0.8739 1)" fill="#dcdcdc" font-size="11.1"  text-anchor="start" xml:space="preserve">Freq    74,465 MHz</text><text transform="translate(851.00 517.30) scale(0.8739 1)" fill="#dcdcdc" font-size="11.1"  text-anchor="start" xml:space="preserve">re im   0,074708 -0,003448</text><text transform="translate(851.00 529.90) scale(0.8739 1)" fill="#dcdcdc" font-size="11.1"  text-anchor="start" xml:space="preserve">Rs jX    58,072 -j402,72m</text><text transform="translate(851.00 542.50) scale(0.8739 1)" fill="#dcdcdc" font-size="11.1"  text-anchor="start" xml:space="preserve">Rs L/C   58,07 5,3072nF</text><text transform="translate(851.00 555.10) scale(0.8739 1)" fill="#dcdcdc" font-size="11.1"  text-anchor="start" xml:space="preserve">Mag Ang  0,0748 -2,642°</text><text transform="translate(851.00 567.70) scale(0.8739 1)" fill="#dcdcdc" font-size="11.1"  text-anchor="start" xml:space="preserve">Imp      58,074</text><text transform="translate(851.00 585.75) scale(0.8739 1)" fill="#dcdcdc" font-size="11.1" font-weight="bold" text-anchor="start" xml:space="preserve">Marker 6 , live</text><text transform="translate(851.00 598.35) scale(0.8739 1)" fill="#dcdcdc" font-size="11.1"  text-anchor="start" xml:space="preserve">Freq    87,504 MHz</text><text transform="translate(851.00 610.95) scale(0.8739 1)" fill="#dcdcdc" font-size="11.1"  text-anchor="start" xml:space="preserve">re im   -0,11448 -0,0047434</text><text transform="translate(851.00 623.55) scale(0.8739 1)" fill="#dcdcdc" font-size="11.1"  text-anchor="start" xml:space="preserve">Rs jX    39,726 -j381,89m</text><text transform="translate(851.00 636.15) scale(0.8739 1)" fill="#dcdcdc" font-size="11.1"  text-anchor="start" xml:space="preserve">Rs L/C   39,73 4,7628nF</text><text transform="translate(851.00 648.75) scale(0.8739 1)" fill="#dcdcdc" font-size="11.1"  text-anchor="start" xml:space="preserve">Mag Ang  0,1146 -177,6°</text><text transform="translate(851.00 661.35) scale(0.8739 1)" fill="#dcdcdc" font-size="11.1"  text-anchor="start" xml:space="preserve">Imp      39,728</text><text transform="translate(851.00 679.40) scale(0.8739 1)" fill="#dcdcdc" font-size="11.1" font-weight="bold" text-anchor="start" xml:space="preserve">Marker 7 , live</text><text transform="translate(851.00 692.00) scale(0.8739 1)" fill="#dcdcdc" font-size="11.1"  text-anchor="start" xml:space="preserve">Freq    107,446 MHz</text><text transform="translate(851.00 704.60) scale(0.8739 1)" fill="#dcdcdc" font-size="11.1"  text-anchor="start" xml:space="preserve">re im   0,12299 0,002592</text><text transform="translate(851.00 717.20) scale(0.8739 1)" fill="#dcdcdc" font-size="11.1"  text-anchor="start" xml:space="preserve">Rs jX    64,023 +j336,99m</text><text transform="translate(851.00 729.80) scale(0.8739 1)" fill="#dcdcdc" font-size="11.1"  text-anchor="start" xml:space="preserve">Rs L/C   64,02 499,17pH</text><text transform="translate(851.00 742.40) scale(0.8739 1)" fill="#dcdcdc" font-size="11.1"  text-anchor="start" xml:space="preserve">Mag Ang  0,1230 1,207°</text><text transform="translate(851.00 755.00) scale(0.8739 1)" fill="#dcdcdc" font-size="11.1"  text-anchor="start" xml:space="preserve">Imp      64,024</text><text transform="translate(851.00 773.05) scale(0.8739 1)" fill="#dcdcdc" font-size="11.1" font-weight="bold" text-anchor="start" xml:space="preserve">Marker 8 , live</text><text transform="translate(851.00 785.65) scale(0.8739 1)" fill="#dcdcdc" font-size="11.1"  text-anchor="start" xml:space="preserve">Freq    120,485 MHz</text><text transform="translate(851.00 798.25) scale(0.8739 1)" fill="#dcdcdc" font-size="11.1"  text-anchor="start" xml:space="preserve">re im   -0,13784 -0,005263</text><text transform="translate(851.00 810.85) scale(0.8739 1)" fill="#dcdcdc" font-size="11.1"  text-anchor="start" xml:space="preserve">Rs jX    37,884 -j406,51m</text><text transform="translate(851.00 823.45) scale(0.8739 1)" fill="#dcdcdc" font-size="11.1"  text-anchor="start" xml:space="preserve">Rs L/C   37,88 3,2495nF</text><text transform="translate(851.00 836.05) scale(0.8739 1)" fill="#dcdcdc" font-size="11.1"  text-anchor="start" xml:space="preserve">Mag Ang  0,1379 -177,8°</text><text transform="translate(851.00 848.65) scale(0.8739 1)" fill="#dcdcdc" font-size="11.1"  text-anchor="start" xml:space="preserve">Imp      37,886</text><text transform="translate(851.00 866.70) scale(0.8739 1)" fill="#dcdcdc" font-size="11.1" font-weight="bold" text-anchor="start" xml:space="preserve">Marker 9 , live</text><text transform="translate(851.00 879.30) scale(0.8739 1)" fill="#dcdcdc" font-size="11.1"  text-anchor="start" xml:space="preserve">Freq    140,427 MHz</text><text transform="translate(851.00 891.90) scale(0.8739 1)" fill="#dcdcdc" font-size="11.1"  text-anchor="start" xml:space="preserve">re im   0,16024 409,43u</text><text transform="translate(851.00 904.50) scale(0.8739 1)" fill="#dcdcdc" font-size="11.1"  text-anchor="start" xml:space="preserve">Rs jX    69,082 +j58,06m</text><text transform="translate(851.00 917.10) scale(0.8739 1)" fill="#dcdcdc" font-size="11.1"  text-anchor="start" xml:space="preserve">Rs L/C   69,08 65,803pH</text><text transform="translate(851.00 929.70) scale(0.8739 1)" fill="#dcdcdc" font-size="11.1"  text-anchor="start" xml:space="preserve">Mag Ang  0,1602 0,1464°</text><text transform="translate(851.00 942.30) scale(0.8739 1)" fill="#dcdcdc" font-size="11.1"  text-anchor="start" xml:space="preserve">Imp      69,082</text><defs><radialGradient id="glow" gradientUnits="userSpaceOnUse" cx="1068" cy="535" r="52" gradientTransform="translate(1068 530) scale(1 3.6) translate(-1068 -530)"><stop offset="0" stop-color="#6e7074" stop-opacity="1"/><stop offset="0.5" stop-color="#45474c" stop-opacity="0.85"/><stop offset="1" stop-color="#1a1e25" stop-opacity="0.0"/></radialGradient><clipPath id="gc"><rect x="1021" y="386" width="47" height="271"/></clipPath></defs><rect x="1021" y="386" width="47" height="271" fill="#191d24"/><rect x="1000" y="300" width="68" height="450" fill="url(#glow)" clip-path="url(#gc)"/><text transform="translate(1062.00 111.83) scale(0.8739 1)" fill="#dcdcdc" font-size="11.1"  text-anchor="end" xml:space="preserve">85</text><line x1="1068.5" y1="108.5" x2="1773.5" y2="108.5" stroke="#4b4c52" stroke-width="1" stroke-dasharray="2 2"/><text transform="translate(1062.00 153.48) scale(0.8739 1)" fill="#dcdcdc" font-size="11.1"  text-anchor="end" xml:space="preserve">80</text><line x1="1068.5" y1="150.5" x2="1773.5" y2="150.5" stroke="#4b4c52" stroke-width="1" stroke-dasharray="2 2"/><text transform="translate(1062.00 195.12) scale(0.8739 1)" fill="#dcdcdc" font-size="11.1"  text-anchor="end" xml:space="preserve">75</text><line x1="1068.5" y1="191.5" x2="1773.5" y2="191.5" stroke="#4b4c52" stroke-width="1" stroke-dasharray="2 2"/><text transform="translate(1062.00 236.77) scale(0.8739 1)" fill="#dcdcdc" font-size="11.1"  text-anchor="end" xml:space="preserve">70</text><line x1="1068.5" y1="233.5" x2="1773.5" y2="233.5" stroke="#4b4c52" stroke-width="1" stroke-dasharray="2 2"/><text transform="translate(1062.00 278.42) scale(0.8739 1)" fill="#dcdcdc" font-size="11.1"  text-anchor="end" xml:space="preserve">65</text><line x1="1068.5" y1="275.5" x2="1773.5" y2="275.5" stroke="#4b4c52" stroke-width="1" stroke-dasharray="2 2"/><text transform="translate(1062.00 320.06) scale(0.8739 1)" fill="#dcdcdc" font-size="11.1"  text-anchor="end" xml:space="preserve">60</text><line x1="1068.5" y1="316.5" x2="1773.5" y2="316.5" stroke="#4b4c52" stroke-width="1" stroke-dasharray="2 2"/><text transform="translate(1062.00 361.70) scale(0.8739 1)" fill="#dcdcdc" font-size="11.1"  text-anchor="end" xml:space="preserve">55</text><line x1="1068.5" y1="358.5" x2="1773.5" y2="358.5" stroke="#4b4c52" stroke-width="1" stroke-dasharray="2 2"/><text transform="translate(1062.00 403.35) scale(0.8739 1)" fill="#dcdcdc" font-size="11.1"  text-anchor="end" xml:space="preserve">50</text><line x1="1068.5" y1="400.5" x2="1773.5" y2="400.5" stroke="#4b4c52" stroke-width="1" stroke-dasharray="2 2"/><text transform="translate(1062.00 445.00) scale(0.8739 1)" fill="#dcdcdc" font-size="11.1"  text-anchor="end" xml:space="preserve">45</text><line x1="1068.5" y1="441.5" x2="1773.5" y2="441.5" stroke="#4b4c52" stroke-width="1" stroke-dasharray="2 2"/><text transform="translate(1062.00 486.64) scale(0.8739 1)" fill="#dcdcdc" font-size="11.1"  text-anchor="end" xml:space="preserve">40</text><line x1="1068.5" y1="483.5" x2="1773.5" y2="483.5" stroke="#4b4c52" stroke-width="1" stroke-dasharray="2 2"/><text transform="translate(1062.00 528.28) scale(0.8739 1)" fill="#dcdcdc" font-size="11.1"  text-anchor="end" xml:space="preserve">35</text><line x1="1068.5" y1="524.5" x2="1773.5" y2="524.5" stroke="#4b4c52" stroke-width="1" stroke-dasharray="2 2"/><text transform="translate(1062.00 569.93) scale(0.8739 1)" fill="#dcdcdc" font-size="11.1"  text-anchor="end" xml:space="preserve">30</text><line x1="1068.5" y1="566.5" x2="1773.5" y2="566.5" stroke="#4b4c52" stroke-width="1" stroke-dasharray="2 2"/><text transform="translate(1062.00 611.57) scale(0.8739 1)" fill="#dcdcdc" font-size="11.1"  text-anchor="end" xml:space="preserve">25</text><line x1="1068.5" y1="608.5" x2="1773.5" y2="608.5" stroke="#4b4c52" stroke-width="1" stroke-dasharray="2 2"/><text transform="translate(1062.00 653.22) scale(0.8739 1)" fill="#dcdcdc" font-size="11.1"  text-anchor="end" xml:space="preserve">20</text><line x1="1068.5" y1="649.5" x2="1773.5" y2="649.5" stroke="#4b4c52" stroke-width="1" stroke-dasharray="2 2"/><text transform="translate(1062.00 694.87) scale(0.8739 1)" fill="#dcdcdc" font-size="11.1"  text-anchor="end" xml:space="preserve">15</text><line x1="1068.5" y1="691.5" x2="1773.5" y2="691.5" stroke="#4b4c52" stroke-width="1" stroke-dasharray="2 2"/><text transform="translate(1062.00 736.51) scale(0.8739 1)" fill="#dcdcdc" font-size="11.1"  text-anchor="end" xml:space="preserve">10</text><line x1="1068.5" y1="733.5" x2="1773.5" y2="733.5" stroke="#4b4c52" stroke-width="1" stroke-dasharray="2 2"/><text transform="translate(1062.00 778.15) scale(0.8739 1)" fill="#dcdcdc" font-size="11.1"  text-anchor="end" xml:space="preserve">5</text><line x1="1068.5" y1="774.5" x2="1773.5" y2="774.5" stroke="#4b4c52" stroke-width="1" stroke-dasharray="2 2"/><text transform="translate(1062.00 819.80) scale(0.8739 1)" fill="#dcdcdc" font-size="11.1"  text-anchor="end" xml:space="preserve">0</text><line x1="1068.5" y1="816.5" x2="1773.5" y2="816.5" stroke="#4b4c52" stroke-width="1" stroke-dasharray="2 2"/><text transform="translate(1062.00 861.44) scale(0.8739 1)" fill="#dcdcdc" font-size="11.1"  text-anchor="end" xml:space="preserve">-5</text><line x1="1068.5" y1="858.5" x2="1773.5" y2="858.5" stroke="#4b4c52" stroke-width="1" stroke-dasharray="2 2"/><text transform="translate(1062.00 903.09) scale(0.8739 1)" fill="#dcdcdc" font-size="11.1"  text-anchor="end" xml:space="preserve">-10</text><line x1="1068.5" y1="899.5" x2="1773.5" y2="899.5" stroke="#4b4c52" stroke-width="1" stroke-dasharray="2 2"/><line x1="1068.5" y1="939.5" x2="1773.5" y2="939.5" stroke="#4b4c52" stroke-width="1" stroke-dasharray="2 2"/><line x1="1068.5" y1="108.5" x2="1068.5" y2="939.5" stroke="#4b4c52" stroke-width="1" stroke-dasharray="2 2"/><line x1="1773.5" y1="108.5" x2="1773.5" y2="939.5" stroke="#4b4c52" stroke-width="1" stroke-dasharray="2 2"/><line x1="1106.5" y1="108.5" x2="1106.5" y2="939.5" stroke="#4b4c52" stroke-width="1" stroke-dasharray="2 2"/><text transform="translate(1106.60 953.00) scale(0.8739 1)" fill="#dcdcdc" font-size="11.1"  text-anchor="middle" xml:space="preserve">10M</text><line x1="1152.5" y1="108.5" x2="1152.5" y2="939.5" stroke="#4b4c52" stroke-width="1" stroke-dasharray="2 2"/><text transform="translate(1152.56 953.00) scale(0.8739 1)" fill="#dcdcdc" font-size="11.1"  text-anchor="middle" xml:space="preserve">20M</text><line x1="1198.5" y1="108.5" x2="1198.5" y2="939.5" stroke="#4b4c52" stroke-width="1" stroke-dasharray="2 2"/><text transform="translate(1198.52 953.00) scale(0.8739 1)" fill="#dcdcdc" font-size="11.1"  text-anchor="middle" xml:space="preserve">30M</text><line x1="1244.5" y1="108.5" x2="1244.5" y2="939.5" stroke="#4b4c52" stroke-width="1" stroke-dasharray="2 2"/><text transform="translate(1244.48 953.00) scale(0.8739 1)" fill="#dcdcdc" font-size="11.1"  text-anchor="middle" xml:space="preserve">40M</text><line x1="1290.5" y1="108.5" x2="1290.5" y2="939.5" stroke="#4b4c52" stroke-width="1" stroke-dasharray="2 2"/><text transform="translate(1290.44 953.00) scale(0.8739 1)" fill="#dcdcdc" font-size="11.1"  text-anchor="middle" xml:space="preserve">50M</text><line x1="1336.5" y1="108.5" x2="1336.5" y2="939.5" stroke="#4b4c52" stroke-width="1" stroke-dasharray="2 2"/><text transform="translate(1336.39 953.00) scale(0.8739 1)" fill="#dcdcdc" font-size="11.1"  text-anchor="middle" xml:space="preserve">60M</text><line x1="1382.5" y1="108.5" x2="1382.5" y2="939.5" stroke="#4b4c52" stroke-width="1" stroke-dasharray="2 2"/><text transform="translate(1382.35 953.00) scale(0.8739 1)" fill="#dcdcdc" font-size="11.1"  text-anchor="middle" xml:space="preserve">70M</text><line x1="1428.5" y1="108.5" x2="1428.5" y2="939.5" stroke="#4b4c52" stroke-width="1" stroke-dasharray="2 2"/><text transform="translate(1428.31 953.00) scale(0.8739 1)" fill="#dcdcdc" font-size="11.1"  text-anchor="middle" xml:space="preserve">80M</text><line x1="1474.5" y1="108.5" x2="1474.5" y2="939.5" stroke="#4b4c52" stroke-width="1" stroke-dasharray="2 2"/><text transform="translate(1474.27 953.00) scale(0.8739 1)" fill="#dcdcdc" font-size="11.1"  text-anchor="middle" xml:space="preserve">90M</text><line x1="1520.5" y1="108.5" x2="1520.5" y2="939.5" stroke="#4b4c52" stroke-width="1" stroke-dasharray="2 2"/><text transform="translate(1520.23 953.00) scale(0.8739 1)" fill="#dcdcdc" font-size="11.1"  text-anchor="middle" xml:space="preserve">100M</text><line x1="1566.5" y1="108.5" x2="1566.5" y2="939.5" stroke="#4b4c52" stroke-width="1" stroke-dasharray="2 2"/><text transform="translate(1566.18 953.00) scale(0.8739 1)" fill="#dcdcdc" font-size="11.1"  text-anchor="middle" xml:space="preserve">110M</text><line x1="1612.5" y1="108.5" x2="1612.5" y2="939.5" stroke="#4b4c52" stroke-width="1" stroke-dasharray="2 2"/><text transform="translate(1612.14 953.00) scale(0.8739 1)" fill="#dcdcdc" font-size="11.1"  text-anchor="middle" xml:space="preserve">120M</text><line x1="1658.5" y1="108.5" x2="1658.5" y2="939.5" stroke="#4b4c52" stroke-width="1" stroke-dasharray="2 2"/><text transform="translate(1658.10 953.00) scale(0.8739 1)" fill="#dcdcdc" font-size="11.1"  text-anchor="middle" xml:space="preserve">130M</text><line x1="1704.5" y1="108.5" x2="1704.5" y2="939.5" stroke="#4b4c52" stroke-width="1" stroke-dasharray="2 2"/><text transform="translate(1704.06 953.00) scale(0.8739 1)" fill="#dcdcdc" font-size="11.1"  text-anchor="middle" xml:space="preserve">140M</text><line x1="1750.5" y1="108.5" x2="1750.5" y2="939.5" stroke="#4b4c52" stroke-width="1" stroke-dasharray="2 2"/><text transform="translate(1750.02 953.00) scale(0.8739 1)" fill="#dcdcdc" font-size="11.1"  text-anchor="middle" xml:space="preserve">150M</text><clipPath id="cl"><rect x="1068.5" y="76" width="725.0" height="862"/></clipPath><polyline clip-path="url(#cl)" points="1068.50,405.91 1069.00,405.69 1069.51,405.47 1070.01,405.25 1070.52,405.02 1071.02,404.80 1071.52,404.57 1072.03,404.34 1072.53,404.11 1073.04,403.87 1073.54,403.64 1074.04,403.40 1074.55,403.17 1075.05,402.93 1075.55,402.69 1076.06,402.45 1076.56,402.22 1077.07,401.98 1077.57,401.74 1078.07,401.50 1078.58,401.26 1079.08,401.03 1079.59,400.79 1080.09,400.55 1080.59,400.32 1081.10,400.08 1081.60,399.85 1082.11,399.62 1082.61,399.39 1083.11,399.16 1083.62,398.94 1084.12,398.71 1084.63,398.49 1085.13,398.27 1085.63,398.06 1086.14,397.84 1086.64,397.63 1087.15,397.42 1087.65,397.22 1088.15,397.02 1088.66,396.82 1089.16,396.63 1089.66,396.44 1090.17,396.25 1090.67,396.07 1091.18,395.89 1091.68,395.72 1092.18,395.55 1092.69,395.39 1093.19,395.23 1093.70,395.08 1094.20,394.94 1094.70,394.79 1095.21,394.66 1095.71,394.53 1096.22,394.41 1096.72,394.29 1097.22,394.18 1097.73,394.08 1098.23,393.98 1098.74,393.89 1099.24,393.80 1099.74,393.73 1100.25,393.66 1100.75,393.60 1101.26,393.54 1101.76,393.49 1102.26,393.46 1102.77,393.42 1103.27,393.40 1103.77,393.39 1104.28,393.38 1104.78,393.38 1105.29,393.39 1105.79,393.41 1106.29,393.44 1106.80,393.48 1107.30,393.52 1107.81,393.58 1108.31,393.64 1108.81,393.71 1109.32,393.79 1109.82,393.88 1110.33,393.98 1110.83,394.09 1111.33,394.20 1111.84,394.33 1112.34,394.46 1112.85,394.61 1113.35,394.76 1113.85,394.92 1114.36,395.09 1114.86,395.27 1115.37,395.46 1115.87,395.66 1116.37,395.86 1116.88,396.08 1117.38,396.30 1117.88,396.53 1118.39,396.77 1118.89,397.02 1119.40,397.28 1119.90,397.54 1120.40,397.81 1120.91,398.09 1121.41,398.38 1121.92,398.68 1122.42,398.98 1122.92,399.30 1123.43,399.62 1123.93,399.94 1124.44,400.28 1124.94,400.62 1125.44,400.97 1125.95,401.32 1126.45,401.68 1126.96,402.05 1127.46,402.42 1127.96,402.80 1128.47,403.19 1128.97,403.58 1129.48,403.98 1129.98,404.38 1130.48,404.79 1130.99,405.20 1131.49,405.62 1131.99,406.04 1132.50,406.46 1133.00,406.90 1133.51,407.33 1134.01,407.77 1134.51,408.21 1135.02,408.66 1135.52,409.10 1136.03,409.56 1136.53,410.01 1137.03,410.47 1137.54,410.92 1138.04,411.39 1138.55,411.85 1139.05,412.31 1139.55,412.78 1140.06,413.24 1140.56,413.71 1141.07,414.18 1141.57,414.65 1142.07,415.12 1142.58,415.59 1143.08,416.06 1143.59,416.52 1144.09,416.99 1144.59,417.46 1145.10,417.92 1145.60,418.39 1146.10,418.85 1146.61,419.31 1147.11,419.77 1147.62,420.23 1148.12,420.68 1148.62,421.13 1149.13,421.58 1149.63,422.02 1150.14,422.46 1150.64,422.90 1151.14,423.34 1151.65,423.76 1152.15,424.19 1152.66,424.61 1153.16,425.03 1153.66,425.44 1154.17,425.84 1154.67,426.24 1155.18,426.64 1155.68,427.03 1156.18,427.41 1156.69,427.79 1157.19,428.16 1157.70,428.52 1158.20,428.88 1158.70,429.23 1159.21,429.58 1159.71,429.91 1160.21,430.24 1160.72,430.56 1161.22,430.87 1161.73,431.18 1162.23,431.48 1162.73,431.77 1163.24,432.05 1163.74,432.32 1164.25,432.58 1164.75,432.83 1165.25,433.08 1165.76,433.31 1166.26,433.54 1166.77,433.75 1167.27,433.96 1167.77,434.16 1168.28,434.34 1168.78,434.52 1169.29,434.69 1169.79,434.84 1170.29,434.99 1170.80,435.12 1171.30,435.25 1171.81,435.36 1172.31,435.46 1172.81,435.56 1173.32,435.64 1173.82,435.71 1174.32,435.77 1174.83,435.82 1175.33,435.85 1175.84,435.88 1176.34,435.90 1176.84,435.90 1177.35,435.89 1177.85,435.87 1178.36,435.84 1178.86,435.80 1179.36,435.75 1179.87,435.68 1180.37,435.60 1180.88,435.52 1181.38,435.41 1181.88,435.30 1182.39,435.18 1182.89,435.04 1183.40,434.89 1183.90,434.73 1184.40,434.56 1184.91,434.38 1185.41,434.18 1185.92,433.97 1186.42,433.75 1186.92,433.52 1187.43,433.27 1187.93,433.02 1188.43,432.75 1188.94,432.47 1189.44,432.17 1189.95,431.87 1190.45,431.55 1190.95,431.22 1191.46,430.88 1191.96,430.53 1192.47,430.16 1192.97,429.78 1193.47,429.40 1193.98,428.99 1194.48,428.58 1194.99,428.16 1195.49,427.72 1195.99,427.27 1196.50,426.82 1197.00,426.35 1197.51,425.86 1198.01,425.37 1198.51,424.87 1199.02,424.35 1199.52,423.83 1200.03,423.29 1200.53,422.74 1201.03,422.18 1201.54,421.62 1202.04,421.04 1202.54,420.45 1203.05,419.85 1203.55,419.24 1204.06,418.63 1204.56,418.00 1205.06,417.36 1205.57,416.72 1206.07,416.06 1206.58,415.40 1207.08,414.73 1207.58,414.05 1208.09,413.36 1208.59,412.67 1209.10,411.96 1209.60,411.25 1210.10,410.54 1210.61,409.81 1211.11,409.08 1211.62,408.35 1212.12,407.60 1212.62,406.85 1213.13,406.10 1213.63,405.34 1214.14,404.58 1214.64,403.81 1215.14,403.04 1215.65,402.26 1216.15,401.48 1216.65,400.70 1217.16,399.91 1217.66,399.12 1218.17,398.33 1218.67,397.54 1219.17,396.75 1219.68,395.96 1220.18,395.16 1220.69,394.37 1221.19,393.57 1221.69,392.78 1222.20,391.99 1222.70,391.20 1223.21,390.41 1223.71,389.62 1224.21,388.84 1224.72,388.06 1225.22,387.28 1225.73,386.51 1226.23,385.74 1226.73,384.98 1227.24,384.23 1227.74,383.48 1228.25,382.73 1228.75,382.00 1229.25,381.27 1229.76,380.55 1230.26,379.83 1230.76,379.13 1231.27,378.44 1231.77,377.75 1232.28,377.08 1232.78,376.42 1233.28,375.77 1233.79,375.13 1234.29,374.50 1234.80,373.89 1235.30,373.28 1235.80,372.70 1236.31,372.12 1236.81,371.57 1237.32,371.02 1237.82,370.49 1238.32,369.98 1238.83,369.49 1239.33,369.01 1239.84,368.55 1240.34,368.10 1240.84,367.68 1241.35,367.27 1241.85,366.88 1242.36,366.51 1242.86,366.16 1243.36,365.83 1243.87,365.52 1244.37,365.23 1244.87,364.96 1245.38,364.71 1245.88,364.49 1246.39,364.28 1246.89,364.10 1247.39,363.94 1247.90,363.80 1248.40,363.68 1248.91,363.59 1249.41,363.51 1249.91,363.46 1250.42,363.44 1250.92,363.43 1251.43,363.45 1251.93,363.50 1252.43,363.57 1252.94,363.67 1253.44,363.79 1253.95,363.93 1254.45,364.11 1254.95,364.30 1255.46,364.53 1255.96,364.77 1256.47,365.05 1256.97,365.34 1257.47,365.67 1257.98,366.01 1258.48,366.38 1258.98,366.78 1259.49,367.20 1259.99,367.64 1260.50,368.11 1261.00,368.59 1261.50,369.11 1262.01,369.64 1262.51,370.20 1263.02,370.78 1263.52,371.37 1264.02,372.00 1264.53,372.64 1265.03,373.30 1265.54,373.98 1266.04,374.68 1266.54,375.40 1267.05,376.14 1267.55,376.90 1268.06,377.67 1268.56,378.46 1269.06,379.27 1269.57,380.09 1270.07,380.93 1270.58,381.79 1271.08,382.66 1271.58,383.54 1272.09,384.44 1272.59,385.35 1273.09,386.28 1273.60,387.21 1274.10,388.16 1274.61,389.12 1275.11,390.08 1275.61,391.06 1276.12,392.05 1276.62,393.05 1277.13,394.05 1277.63,395.06 1278.13,396.08 1278.64,397.11 1279.14,398.14 1279.65,399.18 1280.15,400.22 1280.65,401.26 1281.16,402.31 1281.66,403.37 1282.17,404.42 1282.67,405.48 1283.17,406.54 1283.68,407.60 1284.18,408.66 1284.69,409.73 1285.19,410.79 1285.69,411.85 1286.20,412.91 1286.70,413.97 1287.20,415.02 1287.71,416.08 1288.21,417.12 1288.72,418.17 1289.22,419.21 1289.72,420.25 1290.23,421.28 1290.73,422.31 1291.24,423.33 1291.74,424.34 1292.24,425.35 1292.75,426.35 1293.25,427.35 1293.76,428.33 1294.26,429.31 1294.76,430.28 1295.27,431.24 1295.77,432.19 1296.28,433.13 1296.78,434.06 1297.28,434.98 1297.79,435.89 1298.29,436.79 1298.80,437.67 1299.30,438.55 1299.80,439.41 1300.31,440.27 1300.81,441.11 1301.31,441.93 1301.82,442.74 1302.32,443.54 1302.83,444.33 1303.33,445.10 1303.83,445.86 1304.34,446.61 1304.84,447.34 1305.35,448.05 1305.85,448.75 1306.35,449.44 1306.86,450.10 1307.36,450.76 1307.87,451.40 1308.37,452.02 1308.87,452.62 1309.38,453.21 1309.88,453.78 1310.39,454.34 1310.89,454.88 1311.39,455.40 1311.90,455.90 1312.40,456.39 1312.91,456.86 1313.41,457.31 1313.91,457.74 1314.42,458.16 1314.92,458.55 1315.42,458.93 1315.93,459.29 1316.43,459.63 1316.94,459.96 1317.44,460.26 1317.94,460.55 1318.45,460.81 1318.95,461.06 1319.46,461.29 1319.96,461.50 1320.46,461.69 1320.97,461.86 1321.47,462.02 1321.98,462.15 1322.48,462.26 1322.98,462.36 1323.49,462.44 1323.99,462.49 1324.50,462.53 1325.00,462.55 1325.50,462.55 1326.01,462.53 1326.51,462.49 1327.02,462.44 1327.52,462.36 1328.02,462.26 1328.53,462.14 1329.03,462.01 1329.53,461.85 1330.04,461.68 1330.54,461.48 1331.05,461.26 1331.55,461.03 1332.05,460.77 1332.56,460.50 1333.06,460.20 1333.57,459.88 1334.07,459.55 1334.57,459.19 1335.08,458.82 1335.58,458.42 1336.09,458.00 1336.59,457.56 1337.09,457.11 1337.60,456.63 1338.10,456.13 1338.61,455.61 1339.11,455.07 1339.61,454.51 1340.12,453.94 1340.62,453.34 1341.13,452.72 1341.63,452.08 1342.13,451.41 1342.64,450.73 1343.14,450.03 1343.64,449.31 1344.15,448.57 1344.65,447.81 1345.16,447.03 1345.66,446.23 1346.16,445.41 1346.67,444.57 1347.17,443.71 1347.68,442.83 1348.18,441.93 1348.68,441.01 1349.19,440.07 1349.69,439.11 1350.20,438.14 1350.70,437.14 1351.20,436.13 1351.71,435.10 1352.21,434.05 1352.72,432.98 1353.22,431.90 1353.72,430.79 1354.23,429.67 1354.73,428.53 1355.24,427.38 1355.74,426.21 1356.24,425.02 1356.75,423.81 1357.25,422.59 1357.75,421.36 1358.26,420.11 1358.76,418.84 1359.27,417.56 1359.77,416.27 1360.27,414.96 1360.78,413.64 1361.28,412.31 1361.79,410.96 1362.29,409.60 1362.79,408.23 1363.30,406.85 1363.80,405.46 1364.31,404.06 1364.81,402.65 1365.31,401.23 1365.82,399.81 1366.32,398.37 1366.83,396.93 1367.33,395.49 1367.83,394.03 1368.34,392.58 1368.84,391.11 1369.35,389.65 1369.85,388.18 1370.35,386.71 1370.86,385.24 1371.36,383.77 1371.86,382.30 1372.37,380.83 1372.87,379.37 1373.38,377.90 1373.88,376.44 1374.38,374.99 1374.89,373.54 1375.39,372.10 1375.90,370.67 1376.40,369.24 1376.90,367.83 1377.41,366.43 1377.91,365.03 1378.42,363.66 1378.92,362.29 1379.42,360.94 1379.93,359.61 1380.43,358.29 1380.94,356.99 1381.44,355.72 1381.94,354.46 1382.45,353.22 1382.95,352.01 1383.46,350.82 1383.96,349.65 1384.46,348.51 1384.97,347.40 1385.47,346.31 1385.97,345.25 1386.48,344.23 1386.98,343.23 1387.49,342.27 1387.99,341.34 1388.49,340.44 1389.00,339.58 1389.50,338.76 1390.01,337.97 1390.51,337.22 1391.01,336.51 1391.52,335.84 1392.02,335.20 1392.53,334.61 1393.03,334.06 1393.53,333.56 1394.04,333.09 1394.54,332.67 1395.05,332.30 1395.55,331.97 1396.05,331.68 1396.56,331.44 1397.06,331.25 1397.57,331.10 1398.07,331.00 1398.57,330.95 1399.08,330.94 1399.58,330.98 1400.08,331.07 1400.59,331.21 1401.09,331.39 1401.60,331.63 1402.10,331.90 1402.60,332.23 1403.11,332.60 1403.61,333.02 1404.12,333.49 1404.62,334.00 1405.12,334.56 1405.63,335.16 1406.13,335.81 1406.64,336.50 1407.14,337.24 1407.64,338.01 1408.15,338.84 1408.65,339.70 1409.16,340.60 1409.66,341.55 1410.16,342.53 1410.67,343.55 1411.17,344.62 1411.68,345.71 1412.18,346.85 1412.68,348.02 1413.19,349.22 1413.69,350.46 1414.19,351.73 1414.70,353.03 1415.20,354.36 1415.71,355.72 1416.21,357.11 1416.71,358.53 1417.22,359.97 1417.72,361.44 1418.23,362.93 1418.73,364.44 1419.23,365.98 1419.74,367.53 1420.24,369.11 1420.75,370.70 1421.25,372.31 1421.75,373.94 1422.26,375.58 1422.76,377.23 1423.27,378.90 1423.77,380.58 1424.27,382.27 1424.78,383.97 1425.28,385.68 1425.79,387.40 1426.29,389.12 1426.79,390.84 1427.30,392.58 1427.80,394.31 1428.30,396.05 1428.81,397.79 1429.31,399.53 1429.82,401.26 1430.32,403.00 1430.82,404.74 1431.33,406.47 1431.83,408.20 1432.34,409.92 1432.84,411.64 1433.34,413.35 1433.85,415.06 1434.35,416.76 1434.86,418.44 1435.36,420.12 1435.86,421.79 1436.37,423.45 1436.87,425.10 1437.38,426.74 1437.88,428.36 1438.38,429.97 1438.89,431.57 1439.39,433.16 1439.90,434.73 1440.40,436.28 1440.90,437.82 1441.41,439.34 1441.91,440.85 1442.41,442.34 1442.92,443.81 1443.42,445.27 1443.93,446.70 1444.43,448.12 1444.93,449.52 1445.44,450.90 1445.94,452.26 1446.45,453.60 1446.95,454.92 1447.45,456.23 1447.96,457.51 1448.46,458.76 1448.97,460.00 1449.47,461.22 1449.97,462.42 1450.48,463.59 1450.98,464.74 1451.49,465.87 1451.99,466.98 1452.49,468.06 1453.00,469.12 1453.50,470.16 1454.01,471.18 1454.51,472.17 1455.01,473.14 1455.52,474.08 1456.02,475.01 1456.52,475.90 1457.03,476.78 1457.53,477.63 1458.04,478.46 1458.54,479.26 1459.04,480.04 1459.55,480.79 1460.05,481.52 1460.56,482.22 1461.06,482.90 1461.56,483.56 1462.07,484.19 1462.57,484.79 1463.08,485.37 1463.58,485.93 1464.08,486.46 1464.59,486.97 1465.09,487.45 1465.60,487.90 1466.10,488.33 1466.60,488.74 1467.11,489.12 1467.61,489.48 1468.12,489.81 1468.62,490.12 1469.12,490.40 1469.63,490.65 1470.13,490.89 1470.63,491.09 1471.14,491.28 1471.64,491.44 1472.15,491.57 1472.65,491.68 1473.15,491.76 1473.66,491.82 1474.16,491.86 1474.67,491.87 1475.17,491.86 1475.67,491.82 1476.18,491.76 1476.68,491.67 1477.19,491.56 1477.69,491.42 1478.19,491.26 1478.70,491.07 1479.20,490.86 1479.71,490.62 1480.21,490.35 1480.71,490.06 1481.22,489.75 1481.72,489.41 1482.23,489.04 1482.73,488.65 1483.23,488.23 1483.74,487.79 1484.24,487.32 1484.74,486.82 1485.25,486.29 1485.75,485.74 1486.26,485.17 1486.76,484.56 1487.26,483.93 1487.77,483.27 1488.27,482.59 1488.78,481.87 1489.28,481.13 1489.78,480.36 1490.29,479.57 1490.79,478.75 1491.30,477.89 1491.80,477.02 1492.30,476.11 1492.81,475.17 1493.31,474.21 1493.82,473.22 1494.32,472.20 1494.82,471.15 1495.33,470.07 1495.83,468.97 1496.34,467.83 1496.84,466.67 1497.34,465.48 1497.85,464.26 1498.35,463.01 1498.85,461.73 1499.36,460.42 1499.86,459.09 1500.37,457.72 1500.87,456.33 1501.37,454.91 1501.88,453.45 1502.38,451.97 1502.89,450.47 1503.39,448.93 1503.89,447.36 1504.40,445.77 1504.90,444.14 1505.41,442.49 1505.91,440.81 1506.41,439.11 1506.92,437.37 1507.42,435.61 1507.93,433.82 1508.43,432.00 1508.93,430.16 1509.44,428.29 1509.94,426.39 1510.45,424.47 1510.95,422.53 1511.45,420.55 1511.96,418.56 1512.46,416.54 1512.96,414.49 1513.47,412.43 1513.97,410.34 1514.48,408.22 1514.98,406.09 1515.48,403.94 1515.99,401.76 1516.49,399.57 1517.00,397.36 1517.50,395.13 1518.00,392.88 1518.51,390.62 1519.01,388.34 1519.52,386.05 1520.02,383.75 1520.52,381.43 1521.03,379.11 1521.53,376.77 1522.04,374.43 1522.54,372.07 1523.04,369.72 1523.55,367.35 1524.05,364.99 1524.56,362.62 1525.06,360.25 1525.56,357.88 1526.07,355.52 1526.57,353.16 1527.07,350.81 1527.58,348.46 1528.08,346.12 1528.59,343.79 1529.09,341.48 1529.59,339.18 1530.10,336.90 1530.60,334.63 1531.11,332.39 1531.61,330.16 1532.11,327.96 1532.62,325.79 1533.12,323.65 1533.63,321.53 1534.13,319.45 1534.63,317.40 1535.14,315.39 1535.64,313.41 1536.15,311.48 1536.65,309.59 1537.15,307.74 1537.66,305.94 1538.16,304.18 1538.67,302.48 1539.17,300.82 1539.67,299.23 1540.18,297.68 1540.68,296.20 1541.18,294.77 1541.69,293.40 1542.19,292.10 1542.70,290.86 1543.20,289.69 1543.70,288.58 1544.21,287.54 1544.71,286.57 1545.22,285.68 1545.72,284.85 1546.22,284.10 1546.73,283.42 1547.23,282.81 1547.74,282.28 1548.24,281.83 1548.74,281.45 1549.25,281.15 1549.75,280.93 1550.26,280.79 1550.76,280.72 1551.26,280.73 1551.77,280.82 1552.27,280.99 1552.78,281.24 1553.28,281.58 1553.78,281.99 1554.29,282.48 1554.79,283.06 1555.29,283.71 1555.80,284.45 1556.30,285.27 1556.81,286.16 1557.31,287.13 1557.81,288.18 1558.32,289.30 1558.82,290.49 1559.33,291.76 1559.83,293.09 1560.33,294.50 1560.84,295.96 1561.34,297.50 1561.85,299.09 1562.35,300.75 1562.85,302.46 1563.36,304.23 1563.86,306.06 1564.37,307.94 1564.87,309.87 1565.37,311.84 1565.88,313.87 1566.38,315.94 1566.89,318.05 1567.39,320.20 1567.89,322.38 1568.40,324.61 1568.90,326.86 1569.40,329.15 1569.91,331.47 1570.41,333.82 1570.92,336.19 1571.42,338.58 1571.92,341.00 1572.43,343.43 1572.93,345.89 1573.44,348.36 1573.94,350.84 1574.44,353.33 1574.95,355.84 1575.45,358.35 1575.96,360.87 1576.46,363.40 1576.96,365.93 1577.47,368.46 1577.97,370.99 1578.48,373.52 1578.98,376.05 1579.48,378.57 1579.99,381.09 1580.49,383.60 1581.00,386.10 1581.50,388.60 1582.00,391.08 1582.51,393.56 1583.01,396.02 1583.51,398.46 1584.02,400.90 1584.52,403.31 1585.03,405.71 1585.53,408.10 1586.03,410.46 1586.54,412.81 1587.04,415.14 1587.55,417.44 1588.05,419.73 1588.55,421.99 1589.06,424.23 1589.56,426.45 1590.07,428.64 1590.57,430.81 1591.07,432.96 1591.58,435.08 1592.08,437.17 1592.59,439.24 1593.09,441.28 1593.59,443.29 1594.10,445.28 1594.60,447.24 1595.11,449.17 1595.61,451.08 1596.11,452.95 1596.62,454.80 1597.12,456.61 1597.62,458.40 1598.13,460.16 1598.63,461.89 1599.14,463.59 1599.64,465.26 1600.14,466.89 1600.65,468.50 1601.15,470.08 1601.66,471.62 1602.16,473.14 1602.66,474.63 1603.17,476.08 1603.67,477.50 1604.18,478.89 1604.68,480.25 1605.18,481.58 1605.69,482.88 1606.19,484.15 1606.70,485.38 1607.20,486.58 1607.70,487.75 1608.21,488.89 1608.71,490.00 1609.22,491.08 1609.72,492.12 1610.22,493.14 1610.73,494.12 1611.23,495.06 1611.73,495.98 1612.24,496.87 1612.74,497.72 1613.25,498.54 1613.75,499.33 1614.25,500.08 1614.76,500.81 1615.26,501.50 1615.77,502.16 1616.27,502.78 1616.77,503.38 1617.28,503.94 1617.78,504.48 1618.29,504.98 1618.79,505.45 1619.29,505.89 1619.80,506.29 1620.30,506.67 1620.81,507.02 1621.31,507.34 1621.81,507.62 1622.32,507.88 1622.82,508.10 1623.33,508.30 1623.83,508.47 1624.33,508.61 1624.84,508.71 1625.34,508.79 1625.84,508.84 1626.35,508.86 1626.85,508.85 1627.36,508.81 1627.86,508.74 1628.36,508.65 1628.87,508.52 1629.37,508.36 1629.88,508.18 1630.38,507.96 1630.88,507.72 1631.39,507.44 1631.89,507.14 1632.40,506.80 1632.90,506.44 1633.40,506.04 1633.91,505.61 1634.41,505.16 1634.92,504.67 1635.42,504.15 1635.92,503.60 1636.43,503.02 1636.93,502.40 1637.44,501.76 1637.94,501.08 1638.44,500.37 1638.95,499.63 1639.45,498.85 1639.95,498.05 1640.46,497.21 1640.96,496.33 1641.47,495.43 1641.97,494.49 1642.47,493.52 1642.98,492.51 1643.48,491.47 1643.99,490.39 1644.49,489.28 1644.99,488.14 1645.50,486.96 1646.00,485.74 1646.51,484.49 1647.01,483.21 1647.51,481.89 1648.02,480.53 1648.52,479.14 1649.03,477.71 1649.53,476.24 1650.03,474.74 1650.54,473.20 1651.04,471.62 1651.55,470.01 1652.05,468.36 1652.55,466.67 1653.06,464.94 1653.56,463.18 1654.06,461.38 1654.57,459.54 1655.07,457.66 1655.58,455.74 1656.08,453.79 1656.58,451.79 1657.09,449.76 1657.59,447.69 1658.10,445.58 1658.60,443.44 1659.10,441.25 1659.61,439.03 1660.11,436.77 1660.62,434.47 1661.12,432.13 1661.62,429.75 1662.13,427.34 1662.63,424.89 1663.14,422.41 1663.64,419.88 1664.14,417.32 1664.65,414.73 1665.15,412.10 1665.66,409.43 1666.16,406.73 1666.66,404.00 1667.17,401.24 1667.67,398.44 1668.17,395.61 1668.68,392.75 1669.18,389.86 1669.69,386.94 1670.19,384.00 1670.69,381.02 1671.20,378.02 1671.70,375.00 1672.21,371.96 1672.71,368.89 1673.21,365.80 1673.72,362.70 1674.22,359.57 1674.73,356.44 1675.23,353.28 1675.73,350.12 1676.24,346.95 1676.74,343.77 1677.25,340.58 1677.75,337.39 1678.25,334.20 1678.76,331.00 1679.26,327.82 1679.77,324.64 1680.27,321.46 1680.77,318.30 1681.28,315.15 1681.78,312.02 1682.28,308.91 1682.79,305.82 1683.29,302.76 1683.80,299.73 1684.30,296.73 1684.80,293.76 1685.31,290.83 1685.81,287.94 1686.32,285.10 1686.82,282.31 1687.32,279.56 1687.83,276.87 1688.33,274.24 1688.84,271.68 1689.34,269.17 1689.84,266.74 1690.35,264.37 1690.85,262.08 1691.36,259.87 1691.86,257.74 1692.36,255.69 1692.87,253.73 1693.37,251.86 1693.88,250.08 1694.38,248.40 1694.88,246.81 1695.39,245.33 1695.89,243.95 1696.39,242.67 1696.90,241.50 1697.40,240.44 1697.91,239.49 1698.41,238.65 1698.91,237.93 1699.42,237.32 1699.92,236.82 1700.43,236.44 1700.93,236.18 1701.43,236.03 1701.94,236.01 1702.44,236.10 1702.95,236.30 1703.45,236.63 1703.95,237.07 1704.46,237.63 1704.96,238.31 1705.47,239.10 1705.97,240.00 1706.47,241.01 1706.98,242.14 1707.48,243.38 1707.99,244.72 1708.49,246.17 1708.99,247.72 1709.50,249.37 1710.00,251.12 1710.50,252.96 1711.01,254.90 1711.51,256.92 1712.02,259.04 1712.52,261.23 1713.02,263.51 1713.53,265.86 1714.03,268.29 1714.54,270.79 1715.04,273.36 1715.54,275.99 1716.05,278.68 1716.55,281.44 1717.06,284.24 1717.56,287.10 1718.06,290.00 1718.57,292.95 1719.07,295.94 1719.58,298.97 1720.08,302.04 1720.58,305.13 1721.09,308.26 1721.59,311.41 1722.10,314.59 1722.60,317.78 1723.10,320.99 1723.61,324.22 1724.11,327.46 1724.61,330.71 1725.12,333.96 1725.62,337.22 1726.13,340.49 1726.63,343.75 1727.13,347.01 1727.64,350.26 1728.14,353.51 1728.65,356.75 1729.15,359.98 1729.65,363.20 1730.16,366.41 1730.66,369.60 1731.17,372.77 1731.67,375.92 1732.17,379.06 1732.68,382.17 1733.18,385.26 1733.69,388.32 1734.19,391.37 1734.69,394.38 1735.20,397.37 1735.70,400.33 1736.21,403.27 1736.71,406.17 1737.21,409.04 1737.72,411.88 1738.22,414.69 1738.72,417.47 1739.23,420.22 1739.73,422.93 1740.24,425.61 1740.74,428.25 1741.24,430.86 1741.75,433.43 1742.25,435.97 1742.76,438.48 1743.26,440.94 1743.76,443.38 1744.27,445.77 1744.77,448.13 1745.28,450.45 1745.78,452.74 1746.28,454.99 1746.79,457.20 1747.29,459.37 1747.80,461.51 1748.30,463.61 1748.80,465.68 1749.31,467.70 1749.81,469.69 1750.32,471.65 1750.82,473.56 1751.32,475.44 1751.83,477.29 1752.33,479.09 1752.83,480.86 1753.34,482.60 1753.84,484.29 1754.35,485.95 1754.85,487.58 1755.35,489.17 1755.86,490.72 1756.36,492.24 1756.87,493.72 1757.37,495.17 1757.87,496.58 1758.38,497.96 1758.88,499.30 1759.39,500.60 1759.89,501.88 1760.39,503.11 1760.90,504.32 1761.40,505.48 1761.91,506.62 1762.41,507.72 1762.91,508.78 1763.42,509.82 1763.92,510.82 1764.43,511.78 1764.93,512.71 1765.43,513.61 1765.94,514.48 1766.44,515.31 1766.94,516.11 1767.45,516.87 1767.95,517.61 1768.46,518.31 1768.96,518.97 1769.46,519.61 1769.97,520.21 1770.47,520.78 1770.98,521.32 1771.48,521.82 1771.98,522.30 1772.49,522.74 1772.99,523.14 1773.50,523.52" fill="none" stroke="#1fc41f" stroke-width="1.7"/><polyline clip-path="url(#cl)" points="1068.50,812.20 1069.00,812.07 1069.51,811.94 1070.01,811.82 1070.52,811.70 1071.02,811.59 1071.52,811.48 1072.03,811.38 1072.53,811.29 1073.04,811.20 1073.54,811.12 1074.04,811.04 1074.55,810.97 1075.05,810.91 1075.55,810.86 1076.06,810.81 1076.56,810.77 1077.07,810.74 1077.57,810.72 1078.07,810.71 1078.58,810.70 1079.08,810.70 1079.59,810.71 1080.09,810.74 1080.59,810.76 1081.10,810.80 1081.60,810.85 1082.11,810.90 1082.61,810.97 1083.11,811.04 1083.62,811.12 1084.12,811.21 1084.63,811.30 1085.13,811.41 1085.63,811.52 1086.14,811.64 1086.64,811.77 1087.15,811.90 1087.65,812.05 1088.15,812.20 1088.66,812.36 1089.16,812.52 1089.66,812.69 1090.17,812.87 1090.67,813.06 1091.18,813.25 1091.68,813.45 1092.18,813.66 1092.69,813.87 1093.19,814.09 1093.70,814.31 1094.20,814.54 1094.70,814.77 1095.21,815.01 1095.71,815.26 1096.22,815.51 1096.72,815.76 1097.22,816.02 1097.73,816.29 1098.23,816.55 1098.74,816.83 1099.24,817.10 1099.74,817.38 1100.25,817.67 1100.75,817.95 1101.26,818.25 1101.76,818.54 1102.26,818.84 1102.77,819.14 1103.27,819.44 1103.77,819.74 1104.28,820.05 1104.78,820.36 1105.29,820.67 1105.79,820.98 1106.29,821.30 1106.80,821.61 1107.30,821.93 1107.81,822.24 1108.31,822.56 1108.81,822.88 1109.32,823.20 1109.82,823.52 1110.33,823.84 1110.83,824.15 1111.33,824.47 1111.84,824.79 1112.34,825.10 1112.85,825.42 1113.35,825.73 1113.85,826.04 1114.36,826.35 1114.86,826.65 1115.37,826.96 1115.87,827.26 1116.37,827.56 1116.88,827.85 1117.38,828.15 1117.88,828.44 1118.39,828.72 1118.89,829.00 1119.40,829.28 1119.90,829.55 1120.40,829.82 1120.91,830.08 1121.41,830.34 1121.92,830.59 1122.42,830.84 1122.92,831.08 1123.43,831.32 1123.93,831.55 1124.44,831.77 1124.94,831.99 1125.44,832.20 1125.95,832.40 1126.45,832.60 1126.96,832.79 1127.46,832.97 1127.96,833.15 1128.47,833.31 1128.97,833.47 1129.48,833.63 1129.98,833.77 1130.48,833.90 1130.99,834.03 1131.49,834.15 1131.99,834.26 1132.50,834.36 1133.00,834.45 1133.51,834.54 1134.01,834.61 1134.51,834.68 1135.02,834.73 1135.52,834.78 1136.03,834.81 1136.53,834.84 1137.03,834.86 1137.54,834.87 1138.04,834.86 1138.55,834.85 1139.05,834.83 1139.55,834.80 1140.06,834.75 1140.56,834.70 1141.07,834.64 1141.57,834.57 1142.07,834.48 1142.58,834.39 1143.08,834.29 1143.59,834.17 1144.09,834.05 1144.59,833.92 1145.10,833.77 1145.60,833.62 1146.10,833.45 1146.61,833.28 1147.11,833.09 1147.62,832.90 1148.12,832.69 1148.62,832.48 1149.13,832.25 1149.63,832.01 1150.14,831.77 1150.64,831.51 1151.14,831.25 1151.65,830.97 1152.15,830.69 1152.66,830.39 1153.16,830.09 1153.66,829.78 1154.17,829.45 1154.67,829.12 1155.18,828.78 1155.68,828.43 1156.18,828.07 1156.69,827.70 1157.19,827.33 1157.70,826.94 1158.20,826.55 1158.70,826.14 1159.21,825.73 1159.71,825.31 1160.21,824.89 1160.72,824.45 1161.22,824.01 1161.73,823.56 1162.23,823.10 1162.73,822.63 1163.24,822.16 1163.74,821.68 1164.25,821.19 1164.75,820.70 1165.25,820.20 1165.76,819.69 1166.26,819.18 1166.77,818.66 1167.27,818.14 1167.77,817.60 1168.28,817.07 1168.78,816.53 1169.29,815.98 1169.79,815.43 1170.29,814.87 1170.80,814.31 1171.30,813.74 1171.81,813.17 1172.31,812.59 1172.81,812.01 1173.32,811.43 1173.82,810.84 1174.32,810.25 1174.83,809.66 1175.33,809.07 1175.84,808.47 1176.34,807.87 1176.84,807.26 1177.35,806.66 1177.85,806.05 1178.36,805.44 1178.86,804.84 1179.36,804.22 1179.87,803.61 1180.37,803.00 1180.88,802.39 1181.38,801.77 1181.88,801.16 1182.39,800.55 1182.89,799.94 1183.40,799.32 1183.90,798.71 1184.40,798.11 1184.91,797.50 1185.41,796.89 1185.92,796.29 1186.42,795.69 1186.92,795.09 1187.43,794.49 1187.93,793.89 1188.43,793.30 1188.94,792.72 1189.44,792.13 1189.95,791.55 1190.45,790.98 1190.95,790.41 1191.46,789.84 1191.96,789.28 1192.47,788.72 1192.97,788.17 1193.47,787.63 1193.98,787.09 1194.48,786.56 1194.99,786.03 1195.49,785.52 1195.99,785.00 1196.50,784.50 1197.00,784.00 1197.51,783.51 1198.01,783.03 1198.51,782.56 1199.02,782.10 1199.52,781.65 1200.03,781.20 1200.53,780.77 1201.03,780.34 1201.54,779.92 1202.04,779.52 1202.54,779.13 1203.05,778.74 1203.55,778.37 1204.06,778.01 1204.56,777.66 1205.06,777.32 1205.57,777.00 1206.07,776.69 1206.58,776.39 1207.08,776.10 1207.58,775.83 1208.09,775.57 1208.59,775.32 1209.10,775.09 1209.60,774.87 1210.10,774.67 1210.61,774.48 1211.11,774.30 1211.62,774.15 1212.12,774.00 1212.62,773.87 1213.13,773.76 1213.63,773.67 1214.14,773.59 1214.64,773.53 1215.14,773.48 1215.65,773.45 1216.15,773.44 1216.65,773.44 1217.16,773.47 1217.66,773.51 1218.17,773.56 1218.67,773.64 1219.17,773.73 1219.68,773.84 1220.18,773.97 1220.69,774.12 1221.19,774.29 1221.69,774.47 1222.20,774.68 1222.70,774.90 1223.21,775.14 1223.71,775.40 1224.21,775.68 1224.72,775.98 1225.22,776.30 1225.73,776.63 1226.23,776.99 1226.73,777.36 1227.24,777.75 1227.74,778.16 1228.25,778.59 1228.75,779.04 1229.25,779.51 1229.76,780.00 1230.26,780.50 1230.76,781.02 1231.27,781.56 1231.77,782.12 1232.28,782.70 1232.78,783.29 1233.28,783.91 1233.79,784.53 1234.29,785.18 1234.80,785.84 1235.30,786.52 1235.80,787.22 1236.31,787.93 1236.81,788.66 1237.32,789.40 1237.82,790.16 1238.32,790.93 1238.83,791.72 1239.33,792.52 1239.84,793.33 1240.34,794.16 1240.84,795.00 1241.35,795.85 1241.85,796.71 1242.36,797.59 1242.86,798.48 1243.36,799.37 1243.87,800.28 1244.37,801.20 1244.87,802.12 1245.38,803.06 1245.88,804.00 1246.39,804.95 1246.89,805.90 1247.39,806.87 1247.90,807.83 1248.40,808.81 1248.91,809.78 1249.41,810.77 1249.91,811.75 1250.42,812.74 1250.92,813.73 1251.43,814.72 1251.93,815.71 1252.43,816.70 1252.94,817.69 1253.44,818.68 1253.95,819.67 1254.45,820.66 1254.95,821.64 1255.46,822.62 1255.96,823.60 1256.47,824.57 1256.97,825.53 1257.47,826.49 1257.98,827.44 1258.48,828.39 1258.98,829.33 1259.49,830.25 1259.99,831.17 1260.50,832.08 1261.00,832.98 1261.50,833.87 1262.01,834.74 1262.51,835.61 1263.02,836.46 1263.52,837.30 1264.02,838.12 1264.53,838.93 1265.03,839.72 1265.54,840.50 1266.04,841.27 1266.54,842.01 1267.05,842.75 1267.55,843.46 1268.06,844.16 1268.56,844.83 1269.06,845.49 1269.57,846.13 1270.07,846.76 1270.58,847.36 1271.08,847.94 1271.58,848.51 1272.09,849.05 1272.59,849.57 1273.09,850.07 1273.60,850.55 1274.10,851.01 1274.61,851.45 1275.11,851.86 1275.61,852.25 1276.12,852.62 1276.62,852.97 1277.13,853.30 1277.63,853.60 1278.13,853.88 1278.64,854.14 1279.14,854.37 1279.65,854.58 1280.15,854.77 1280.65,854.94 1281.16,855.08 1281.66,855.20 1282.17,855.29 1282.67,855.36 1283.17,855.41 1283.68,855.44 1284.18,855.44 1284.69,855.42 1285.19,855.38 1285.69,855.31 1286.20,855.22 1286.70,855.11 1287.20,854.97 1287.71,854.81 1288.21,854.63 1288.72,854.43 1289.22,854.21 1289.72,853.96 1290.23,853.70 1290.73,853.41 1291.24,853.10 1291.74,852.77 1292.24,852.42 1292.75,852.05 1293.25,851.66 1293.76,851.24 1294.26,850.81 1294.76,850.36 1295.27,849.89 1295.77,849.40 1296.28,848.90 1296.78,848.37 1297.28,847.83 1297.79,847.26 1298.29,846.69 1298.80,846.09 1299.30,845.48 1299.80,844.84 1300.31,844.20 1300.81,843.53 1301.31,842.86 1301.82,842.16 1302.32,841.45 1302.83,840.73 1303.33,839.99 1303.83,839.23 1304.34,838.47 1304.84,837.69 1305.35,836.89 1305.85,836.08 1306.35,835.26 1306.86,834.43 1307.36,833.58 1307.87,832.73 1308.37,831.86 1308.87,830.98 1309.38,830.08 1309.88,829.18 1310.39,828.27 1310.89,827.35 1311.39,826.42 1311.90,825.48 1312.40,824.52 1312.91,823.57 1313.41,822.60 1313.91,821.62 1314.42,820.64 1314.92,819.65 1315.42,818.65 1315.93,817.64 1316.43,816.63 1316.94,815.61 1317.44,814.59 1317.94,813.56 1318.45,812.52 1318.95,811.48 1319.46,810.44 1319.96,809.39 1320.46,808.33 1320.97,807.27 1321.47,806.21 1321.98,805.14 1322.48,804.07 1322.98,803.00 1323.49,801.92 1323.99,800.85 1324.50,799.77 1325.00,798.68 1325.50,797.60 1326.01,796.52 1326.51,795.43 1327.02,794.34 1327.52,793.26 1328.02,792.17 1328.53,791.08 1329.03,789.99 1329.53,788.91 1330.04,787.82 1330.54,786.74 1331.05,785.66 1331.55,784.58 1332.05,783.50 1332.56,782.42 1333.06,781.35 1333.57,780.28 1334.07,779.22 1334.57,778.15 1335.08,777.10 1335.58,776.04 1336.09,775.00 1336.59,773.95 1337.09,772.91 1337.60,771.88 1338.10,770.86 1338.61,769.84 1339.11,768.83 1339.61,767.82 1340.12,766.82 1340.62,765.83 1341.13,764.85 1341.63,763.88 1342.13,762.92 1342.64,761.96 1343.14,761.02 1343.64,760.09 1344.15,759.16 1344.65,758.25 1345.16,757.35 1345.66,756.46 1346.16,755.59 1346.67,754.72 1347.17,753.87 1347.68,753.03 1348.18,752.21 1348.68,751.40 1349.19,750.61 1349.69,749.83 1350.20,749.07 1350.70,748.32 1351.20,747.59 1351.71,746.88 1352.21,746.18 1352.72,745.50 1353.22,744.84 1353.72,744.20 1354.23,743.58 1354.73,742.98 1355.24,742.40 1355.74,741.84 1356.24,741.30 1356.75,740.78 1357.25,740.29 1357.75,739.82 1358.26,739.37 1358.76,738.94 1359.27,738.54 1359.77,738.17 1360.27,737.81 1360.78,737.49 1361.28,737.19 1361.79,736.92 1362.29,736.67 1362.79,736.45 1363.30,736.26 1363.80,736.10 1364.31,735.97 1364.81,735.86 1365.31,735.79 1365.82,735.74 1366.32,735.73 1366.83,735.75 1367.33,735.80 1367.83,735.88 1368.34,735.99 1368.84,736.14 1369.35,736.32 1369.85,736.53 1370.35,736.78 1370.86,737.06 1371.36,737.37 1371.86,737.72 1372.37,738.10 1372.87,738.52 1373.38,738.98 1373.88,739.47 1374.38,739.99 1374.89,740.55 1375.39,741.15 1375.90,741.78 1376.40,742.45 1376.90,743.16 1377.41,743.90 1377.91,744.68 1378.42,745.49 1378.92,746.34 1379.42,747.23 1379.93,748.15 1380.43,749.11 1380.94,750.10 1381.44,751.13 1381.94,752.19 1382.45,753.29 1382.95,754.42 1383.46,755.59 1383.96,756.79 1384.46,758.02 1384.97,759.28 1385.47,760.58 1385.97,761.91 1386.48,763.27 1386.98,764.65 1387.49,766.07 1387.99,767.51 1388.49,768.99 1389.00,770.49 1389.50,772.01 1390.01,773.56 1390.51,775.14 1391.01,776.74 1391.52,778.35 1392.02,780.00 1392.53,781.66 1393.03,783.33 1393.53,785.03 1394.04,786.74 1394.54,788.47 1395.05,790.22 1395.55,791.97 1396.05,793.74 1396.56,795.51 1397.06,797.30 1397.57,799.09 1398.07,800.89 1398.57,802.70 1399.08,804.51 1399.58,806.31 1400.08,808.12 1400.59,809.93 1401.09,811.74 1401.60,813.55 1402.10,815.34 1402.60,817.14 1403.11,818.92 1403.61,820.70 1404.12,822.46 1404.62,824.21 1405.12,825.95 1405.63,827.68 1406.13,829.39 1406.64,831.08 1407.14,832.76 1407.64,834.41 1408.15,836.04 1408.65,837.66 1409.16,839.25 1409.66,840.81 1410.16,842.35 1410.67,843.86 1411.17,845.35 1411.68,846.81 1412.18,848.24 1412.68,849.64 1413.19,851.01 1413.69,852.35 1414.19,853.65 1414.70,854.92 1415.20,856.16 1415.71,857.36 1416.21,858.53 1416.71,859.66 1417.22,860.76 1417.72,861.82 1418.23,862.84 1418.73,863.82 1419.23,864.77 1419.74,865.67 1420.24,866.54 1420.75,867.37 1421.25,868.16 1421.75,868.91 1422.26,869.62 1422.76,870.30 1423.27,870.93 1423.77,871.52 1424.27,872.07 1424.78,872.58 1425.28,873.05 1425.79,873.49 1426.29,873.88 1426.79,874.23 1427.30,874.55 1427.80,874.82 1428.30,875.06 1428.81,875.25 1429.31,875.41 1429.82,875.53 1430.32,875.62 1430.82,875.66 1431.33,875.67 1431.83,875.64 1432.34,875.57 1432.84,875.47 1433.34,875.33 1433.85,875.16 1434.35,874.95 1434.86,874.71 1435.36,874.43 1435.86,874.12 1436.37,873.78 1436.87,873.40 1437.38,872.99 1437.88,872.55 1438.38,872.08 1438.89,871.57 1439.39,871.04 1439.90,870.47 1440.40,869.88 1440.90,869.26 1441.41,868.60 1441.91,867.92 1442.41,867.22 1442.92,866.48 1443.42,865.72 1443.93,864.93 1444.43,864.12 1444.93,863.28 1445.44,862.42 1445.94,861.53 1446.45,860.62 1446.95,859.69 1447.45,858.73 1447.96,857.75 1448.46,856.75 1448.97,855.73 1449.47,854.69 1449.97,853.63 1450.48,852.55 1450.98,851.45 1451.49,850.32 1451.99,849.19 1452.49,848.03 1453.00,846.85 1453.50,845.66 1454.01,844.45 1454.51,843.23 1455.01,841.99 1455.52,840.73 1456.02,839.46 1456.52,838.18 1457.03,836.88 1457.53,835.56 1458.04,834.24 1458.54,832.90 1459.04,831.55 1459.55,830.18 1460.05,828.80 1460.56,827.42 1461.06,826.02 1461.56,824.61 1462.07,823.19 1462.57,821.76 1463.08,820.32 1463.58,818.87 1464.08,817.41 1464.59,815.94 1465.09,814.47 1465.60,812.98 1466.10,811.49 1466.60,810.00 1467.11,808.49 1467.61,806.98 1468.12,805.46 1468.62,803.93 1469.12,802.40 1469.63,800.87 1470.13,799.33 1470.63,797.78 1471.14,796.23 1471.64,794.67 1472.15,793.11 1472.65,791.55 1473.15,789.98 1473.66,788.41 1474.16,786.84 1474.67,785.26 1475.17,783.69 1475.67,782.11 1476.18,780.52 1476.68,778.94 1477.19,777.36 1477.69,775.77 1478.19,774.19 1478.70,772.60 1479.20,771.02 1479.71,769.43 1480.21,767.85 1480.71,766.26 1481.22,764.68 1481.72,763.10 1482.23,761.52 1482.73,759.94 1483.23,758.37 1483.74,756.80 1484.24,755.23 1484.74,753.67 1485.25,752.11 1485.75,750.55 1486.26,749.00 1486.76,747.45 1487.26,745.91 1487.77,744.38 1488.27,742.85 1488.78,741.33 1489.28,739.81 1489.78,738.30 1490.29,736.80 1490.79,735.31 1491.30,733.83 1491.80,732.35 1492.30,730.89 1492.81,729.43 1493.31,727.99 1493.82,726.56 1494.32,725.13 1494.82,723.72 1495.33,722.33 1495.83,720.94 1496.34,719.57 1496.84,718.21 1497.34,716.87 1497.85,715.54 1498.35,714.23 1498.85,712.93 1499.36,711.65 1499.86,710.39 1500.37,709.15 1500.87,707.92 1501.37,706.72 1501.88,705.53 1502.38,704.37 1502.89,703.22 1503.39,702.10 1503.89,701.00 1504.40,699.92 1504.90,698.87 1505.41,697.84 1505.91,696.84 1506.41,695.87 1506.92,694.92 1507.42,694.00 1507.93,693.10 1508.43,692.24 1508.93,691.41 1509.44,690.61 1509.94,689.84 1510.45,689.10 1510.95,688.40 1511.45,687.73 1511.96,687.10 1512.46,686.50 1512.96,685.94 1513.47,685.42 1513.97,684.94 1514.48,684.49 1514.98,684.09 1515.48,683.73 1515.99,683.41 1516.49,683.14 1517.00,682.91 1517.50,682.72 1518.00,682.58 1518.51,682.49 1519.01,682.44 1519.52,682.44 1520.02,682.49 1520.52,682.60 1521.03,682.75 1521.53,682.96 1522.04,683.21 1522.54,683.53 1523.04,683.89 1523.55,684.31 1524.05,684.79 1524.56,685.33 1525.06,685.92 1525.56,686.57 1526.07,687.28 1526.57,688.05 1527.07,688.87 1527.58,689.76 1528.08,690.71 1528.59,691.72 1529.09,692.79 1529.59,693.93 1530.10,695.12 1530.60,696.38 1531.11,697.70 1531.61,699.08 1532.11,700.52 1532.62,702.02 1533.12,703.59 1533.63,705.22 1534.13,706.91 1534.63,708.65 1535.14,710.46 1535.64,712.33 1536.15,714.26 1536.65,716.24 1537.15,718.28 1537.66,720.38 1538.16,722.53 1538.67,724.73 1539.17,726.99 1539.67,729.30 1540.18,731.66 1540.68,734.06 1541.18,736.52 1541.69,739.01 1542.19,741.55 1542.70,744.14 1543.20,746.76 1543.70,749.42 1544.21,752.11 1544.71,754.84 1545.22,757.60 1545.72,760.39 1546.22,763.21 1546.73,766.05 1547.23,768.91 1547.74,771.79 1548.24,774.69 1548.74,777.60 1549.25,780.53 1549.75,783.47 1550.26,786.41 1550.76,789.36 1551.26,792.31 1551.77,795.26 1552.27,798.20 1552.78,801.14 1553.28,804.08 1553.78,807.00 1554.29,809.91 1554.79,812.80 1555.29,815.68 1555.80,818.53 1556.30,821.36 1556.81,824.17 1557.31,826.95 1557.81,829.70 1558.32,832.41 1558.82,835.09 1559.33,837.74 1559.83,840.34 1560.33,842.91 1560.84,845.43 1561.34,847.91 1561.85,850.34 1562.35,852.72 1562.85,855.05 1563.36,857.33 1563.86,859.56 1564.37,861.73 1564.87,863.85 1565.37,865.91 1565.88,867.91 1566.38,869.86 1566.89,871.74 1567.39,873.57 1567.89,875.33 1568.40,877.03 1568.90,878.67 1569.40,880.24 1569.91,881.76 1570.41,883.20 1570.92,884.59 1571.42,885.91 1571.92,887.16 1572.43,888.36 1572.93,889.48 1573.44,890.54 1573.94,891.54 1574.44,892.47 1574.95,893.34 1575.45,894.15 1575.96,894.89 1576.46,895.57 1576.96,896.18 1577.47,896.74 1577.97,897.23 1578.48,897.66 1578.98,898.03 1579.48,898.33 1579.99,898.58 1580.49,898.77 1581.00,898.90 1581.50,898.97 1582.00,898.99 1582.51,898.95 1583.01,898.85 1583.51,898.70 1584.02,898.49 1584.52,898.23 1585.03,897.92 1585.53,897.56 1586.03,897.15 1586.54,896.69 1587.04,896.18 1587.55,895.63 1588.05,895.03 1588.55,894.38 1589.06,893.70 1589.56,892.96 1590.07,892.19 1590.57,891.37 1591.07,890.52 1591.58,889.63 1592.08,888.69 1592.59,887.72 1593.09,886.72 1593.59,885.68 1594.10,884.60 1594.60,883.49 1595.11,882.35 1595.61,881.18 1596.11,879.97 1596.62,878.74 1597.12,877.47 1597.62,876.18 1598.13,874.86 1598.63,873.51 1599.14,872.14 1599.64,870.74 1600.14,869.32 1600.65,867.87 1601.15,866.40 1601.66,864.91 1602.16,863.39 1602.66,861.86 1603.17,860.30 1603.67,858.73 1604.18,857.13 1604.68,855.52 1605.18,853.89 1605.69,852.24 1606.19,850.58 1606.70,848.90 1607.20,847.20 1607.70,845.49 1608.21,843.77 1608.71,842.03 1609.22,840.28 1609.72,838.51 1610.22,836.74 1610.73,834.95 1611.23,833.16 1611.73,831.35 1612.24,829.53 1612.74,827.70 1613.25,825.86 1613.75,824.02 1614.25,822.17 1614.76,820.31 1615.26,818.44 1615.77,816.56 1616.27,814.68 1616.77,812.79 1617.28,810.90 1617.78,809.00 1618.29,807.10 1618.79,805.19 1619.29,803.27 1619.80,801.35 1620.30,799.43 1620.81,797.50 1621.31,795.57 1621.81,793.63 1622.32,791.69 1622.82,789.75 1623.33,787.81 1623.83,785.86 1624.33,783.91 1624.84,781.96 1625.34,780.00 1625.84,778.05 1626.35,776.09 1626.85,774.13 1627.36,772.17 1627.86,770.21 1628.36,768.25 1628.87,766.29 1629.37,764.33 1629.88,762.36 1630.38,760.40 1630.88,758.44 1631.39,756.48 1631.89,754.53 1632.40,752.57 1632.90,750.61 1633.40,748.66 1633.91,746.71 1634.41,744.76 1634.92,742.81 1635.42,740.87 1635.92,738.93 1636.43,736.99 1636.93,735.06 1637.44,733.14 1637.94,731.21 1638.44,729.29 1638.95,727.38 1639.45,725.47 1639.95,723.57 1640.46,721.68 1640.96,719.79 1641.47,717.91 1641.97,716.03 1642.47,714.17 1642.98,712.31 1643.48,710.46 1643.99,708.62 1644.49,706.79 1644.99,704.97 1645.50,703.16 1646.00,701.36 1646.51,699.57 1647.01,697.80 1647.51,696.04 1648.02,694.29 1648.52,692.55 1649.03,690.83 1649.53,689.13 1650.03,687.44 1650.54,685.77 1651.04,684.11 1651.55,682.47 1652.05,680.85 1652.55,679.25 1653.06,677.67 1653.56,676.11 1654.06,674.58 1654.57,673.06 1655.07,671.57 1655.58,670.10 1656.08,668.66 1656.58,667.24 1657.09,665.86 1657.59,664.49 1658.10,663.16 1658.60,661.86 1659.10,660.59 1659.61,659.35 1660.11,658.14 1660.62,656.97 1661.12,655.84 1661.62,654.74 1662.13,653.67 1662.63,652.65 1663.14,651.67 1663.64,650.73 1664.14,649.83 1664.65,648.98 1665.15,648.17 1665.66,647.41 1666.16,646.69 1666.66,646.03 1667.17,645.42 1667.67,644.85 1668.17,644.35 1668.68,643.90 1669.18,643.50 1669.69,643.16 1670.19,642.89 1670.69,642.67 1671.20,642.51 1671.70,642.42 1672.21,642.40 1672.71,642.44 1673.21,642.55 1673.72,642.73 1674.22,642.98 1674.73,643.31 1675.23,643.70 1675.73,644.18 1676.24,644.73 1676.74,645.36 1677.25,646.07 1677.75,646.86 1678.25,647.74 1678.76,648.69 1679.26,649.74 1679.77,650.86 1680.27,652.08 1680.77,653.38 1681.28,654.77 1681.78,656.24 1682.28,657.81 1682.79,659.47 1683.29,661.22 1683.80,663.05 1684.30,664.98 1684.80,667.00 1685.31,669.11 1685.81,671.30 1686.32,673.59 1686.82,675.97 1687.32,678.43 1687.83,680.99 1688.33,683.63 1688.84,686.35 1689.34,689.16 1689.84,692.05 1690.35,695.02 1690.85,698.07 1691.36,701.20 1691.86,704.40 1692.36,707.68 1692.87,711.03 1693.37,714.44 1693.88,717.92 1694.38,721.46 1694.88,725.06 1695.39,728.71 1695.89,732.42 1696.39,736.18 1696.90,739.98 1697.40,743.83 1697.91,747.71 1698.41,751.63 1698.91,755.57 1699.42,759.55 1699.92,763.54 1700.43,767.56 1700.93,771.59 1701.43,775.63 1701.94,779.67 1702.44,783.72 1702.95,787.76 1703.45,791.80 1703.95,795.82 1704.46,799.83 1704.96,803.83 1705.47,807.79 1705.97,811.74 1706.47,815.65 1706.98,819.52 1707.48,823.36 1707.99,827.16 1708.49,830.90 1708.99,834.60 1709.50,838.25 1710.00,841.84 1710.50,845.37 1711.01,848.84 1711.51,852.24 1712.02,855.58 1712.52,858.84 1713.02,862.03 1713.53,865.15 1714.03,868.18 1714.54,871.14 1715.04,874.02 1715.54,876.82 1716.05,879.53 1716.55,882.15 1717.06,884.69 1717.56,887.14 1718.06,889.50 1718.57,891.78 1719.07,893.96 1719.58,896.05 1720.08,898.06 1720.58,899.97 1721.09,901.79 1721.59,903.52 1722.10,905.16 1722.60,906.71 1723.10,908.16 1723.61,909.53 1724.11,910.81 1724.61,912.00 1725.12,913.11 1725.62,914.12 1726.13,915.05 1726.63,915.89 1727.13,916.65 1727.64,917.33 1728.14,917.92 1728.65,918.43 1729.15,918.86 1729.65,919.22 1730.16,919.49 1730.66,919.68 1731.17,919.81 1731.67,919.85 1732.17,919.82 1732.68,919.73 1733.18,919.56 1733.69,919.32 1734.19,919.01 1734.69,918.64 1735.20,918.21 1735.70,917.71 1736.21,917.15 1736.71,916.53 1737.21,915.85 1737.72,915.12 1738.22,914.33 1738.72,913.48 1739.23,912.58 1739.73,911.63 1740.24,910.63 1740.74,909.58 1741.24,908.49 1741.75,907.34 1742.25,906.15 1742.76,904.92 1743.26,903.65 1743.76,902.33 1744.27,900.97 1744.77,899.58 1745.28,898.14 1745.78,896.67 1746.28,895.16 1746.79,893.62 1747.29,892.04 1747.80,890.44 1748.30,888.79 1748.80,887.12 1749.31,885.42 1749.81,883.69 1750.32,881.93 1750.82,880.14 1751.32,878.33 1751.83,876.49 1752.33,874.63 1752.83,872.74 1753.34,870.83 1753.84,868.89 1754.35,866.94 1754.85,864.96 1755.35,862.96 1755.86,860.94 1756.36,858.91 1756.87,856.85 1757.37,854.78 1757.87,852.69 1758.38,850.58 1758.88,848.45 1759.39,846.31 1759.89,844.16 1760.39,841.99 1760.90,839.80 1761.40,837.60 1761.91,835.39 1762.41,833.17 1762.91,830.93 1763.42,828.68 1763.92,826.42 1764.43,824.15 1764.93,821.87 1765.43,819.58 1765.94,817.28 1766.44,814.97 1766.94,812.64 1767.45,810.32 1767.95,807.98 1768.46,805.63 1768.96,803.28 1769.46,800.92 1769.97,798.55 1770.47,796.17 1770.98,793.79 1771.48,791.41 1771.98,789.01 1772.49,786.61 1772.99,784.21 1773.50,781.80" fill="none" stroke="#d6d25c" stroke-width="1.5"/><path d="M1091.4,385.8 L1101.9,385.8 L1096.7,394.3 Z" fill="#12161e" stroke="#eeeeee" stroke-width="1.2" stroke-linejoin="miter"/><rect x="1082.5" y="382.6" width="6" height="12" fill="#12161e"/><text transform="translate(1085.50 391.99) scale(0.8739 1)" fill="#dcdcdc" font-size="11.1"  text-anchor="middle" xml:space="preserve">1</text><path d="M1091.4,807.3 L1101.9,807.3 L1096.7,815.8 Z" fill="#12161e" stroke="#eeeeee" stroke-width="1.2" stroke-linejoin="miter"/><rect x="1082.5" y="804.1" width="6" height="12" fill="#12161e"/><text transform="translate(1085.50 813.45) scale(0.8739 1)" fill="#dcdcdc" font-size="11.1"  text-anchor="middle" xml:space="preserve">1</text><path d="M1161.9,425.4 L1172.4,425.4 L1167.2,433.9 Z" fill="#12161e" stroke="#eeeeee" stroke-width="1.2" stroke-linejoin="miter"/><rect x="1153.0" y="422.2" width="6" height="12" fill="#12161e"/><text transform="translate(1156.00 431.63) scale(0.8739 1)" fill="#dcdcdc" font-size="11.1"  text-anchor="middle" xml:space="preserve">2</text><path d="M1161.9,809.7 L1172.4,809.7 L1167.2,818.2 Z" fill="#12161e" stroke="#eeeeee" stroke-width="1.2" stroke-linejoin="miter"/><rect x="1153.0" y="806.5" width="6" height="12" fill="#12161e"/><text transform="translate(1156.00 815.91) scale(0.8739 1)" fill="#dcdcdc" font-size="11.1"  text-anchor="middle" xml:space="preserve">2</text><path d="M1246.5,355.0 L1257.0,355.0 L1251.8,363.5 Z" fill="#12161e" stroke="#eeeeee" stroke-width="1.2" stroke-linejoin="miter"/><rect x="1237.6" y="351.8" width="6" height="12" fill="#12161e"/><text transform="translate(1240.60 361.19) scale(0.8739 1)" fill="#dcdcdc" font-size="11.1"  text-anchor="middle" xml:space="preserve">3</text><path d="M1246.5,807.0 L1257.0,807.0 L1251.8,815.5 Z" fill="#12161e" stroke="#eeeeee" stroke-width="1.2" stroke-linejoin="miter"/><rect x="1237.6" y="803.8" width="6" height="12" fill="#12161e"/><text transform="translate(1240.60 813.15) scale(0.8739 1)" fill="#dcdcdc" font-size="11.1"  text-anchor="middle" xml:space="preserve">3</text><path d="M1310.0,450.3 L1320.5,450.3 L1315.2,458.8 Z" fill="#12161e" stroke="#eeeeee" stroke-width="1.2" stroke-linejoin="miter"/><rect x="1301.0" y="447.1" width="6" height="12" fill="#12161e"/><text transform="translate(1304.05 456.50) scale(0.8739 1)" fill="#dcdcdc" font-size="11.1"  text-anchor="middle" xml:space="preserve">4</text><path d="M1310.0,810.5 L1320.5,810.5 L1315.2,819.0 Z" fill="#12161e" stroke="#eeeeee" stroke-width="1.2" stroke-linejoin="miter"/><rect x="1301.0" y="807.3" width="6" height="12" fill="#12161e"/><text transform="translate(1304.05 816.70) scale(0.8739 1)" fill="#dcdcdc" font-size="11.1"  text-anchor="middle" xml:space="preserve">4</text><path d="M1398.1,324.3 L1408.6,324.3 L1403.4,332.8 Z" fill="#12161e" stroke="#eeeeee" stroke-width="1.2" stroke-linejoin="miter"/><rect x="1389.2" y="321.1" width="6" height="12" fill="#12161e"/><text transform="translate(1392.17 330.52) scale(0.8739 1)" fill="#dcdcdc" font-size="11.1"  text-anchor="middle" xml:space="preserve">5</text><path d="M1398.1,811.4 L1408.6,811.4 L1403.4,819.9 Z" fill="#12161e" stroke="#eeeeee" stroke-width="1.2" stroke-linejoin="miter"/><rect x="1389.2" y="808.2" width="6" height="12" fill="#12161e"/><text transform="translate(1392.17 817.55) scale(0.8739 1)" fill="#dcdcdc" font-size="11.1"  text-anchor="middle" xml:space="preserve">5</text><path d="M1458.0,477.1 L1468.5,477.1 L1463.3,485.6 Z" fill="#12161e" stroke="#eeeeee" stroke-width="1.2" stroke-linejoin="miter"/><rect x="1471.5" y="473.9" width="6" height="12" fill="#12161e"/><text transform="translate(1474.50 483.32) scale(0.8739 1)" fill="#dcdcdc" font-size="11.1"  text-anchor="middle" xml:space="preserve">6</text><path d="M1458.0,811.2 L1468.5,811.2 L1463.3,819.7 Z" fill="#12161e" stroke="#eeeeee" stroke-width="1.2" stroke-linejoin="miter"/><rect x="1471.5" y="808.0" width="6" height="12" fill="#12161e"/><text transform="translate(1474.50 817.38) scale(0.8739 1)" fill="#dcdcdc" font-size="11.1"  text-anchor="middle" xml:space="preserve">6</text><path d="M1549.7,274.8 L1560.2,274.8 L1554.9,283.3 Z" fill="#12161e" stroke="#eeeeee" stroke-width="1.2" stroke-linejoin="miter"/><rect x="1563.1" y="271.6" width="6" height="12" fill="#12161e"/><text transform="translate(1566.15 280.95) scale(0.8739 1)" fill="#dcdcdc" font-size="11.1"  text-anchor="middle" xml:space="preserve">7</text><path d="M1549.7,805.2 L1560.2,805.2 L1554.9,813.7 Z" fill="#12161e" stroke="#eeeeee" stroke-width="1.2" stroke-linejoin="miter"/><rect x="1563.1" y="802.0" width="6" height="12" fill="#12161e"/><text transform="translate(1566.15 811.39) scale(0.8739 1)" fill="#dcdcdc" font-size="11.1"  text-anchor="middle" xml:space="preserve">7</text><path d="M1609.6,492.5 L1620.1,492.5 L1614.9,501.0 Z" fill="#12161e" stroke="#eeeeee" stroke-width="1.2" stroke-linejoin="miter"/><rect x="1623.1" y="489.3" width="6" height="12" fill="#12161e"/><text transform="translate(1626.07 498.66) scale(0.8739 1)" fill="#dcdcdc" font-size="11.1"  text-anchor="middle" xml:space="preserve">8</text><path d="M1609.6,811.4 L1620.1,811.4 L1614.9,819.9 Z" fill="#12161e" stroke="#eeeeee" stroke-width="1.2" stroke-linejoin="miter"/><rect x="1623.1" y="808.2" width="6" height="12" fill="#12161e"/><text transform="translate(1626.07 817.59) scale(0.8739 1)" fill="#dcdcdc" font-size="11.1"  text-anchor="middle" xml:space="preserve">8</text><path d="M1701.3,232.6 L1711.8,232.6 L1706.5,241.1 Z" fill="#12161e" stroke="#eeeeee" stroke-width="1.2" stroke-linejoin="miter"/><rect x="1714.7" y="229.4" width="6" height="12" fill="#12161e"/><text transform="translate(1717.72 238.82) scale(0.8739 1)" fill="#dcdcdc" font-size="11.1"  text-anchor="middle" xml:space="preserve">9</text><path d="M1701.3,807.5 L1711.8,807.5 L1706.5,816.0 Z" fill="#12161e" stroke="#eeeeee" stroke-width="1.2" stroke-linejoin="miter"/><rect x="1714.7" y="804.3" width="6" height="12" fill="#12161e"/><text transform="translate(1717.72 813.72) scale(0.8739 1)" fill="#dcdcdc" font-size="11.1"  text-anchor="middle" xml:space="preserve">9</text><text transform="translate(1015.00 88.00) scale(0.8739 1)" fill="#f0f0f0" font-size="11.1" font-weight="bold" text-anchor="start" xml:space="preserve">Freq Rs+jX S11</text><text transform="translate(1113.00 88.00) scale(0.8739 1)" fill="#1fc41f" font-size="11.1"  text-anchor="start" xml:space="preserve">S11 Rs live</text><text transform="translate(1113.00 100.50) scale(0.8739 1)" fill="#d6d25c" font-size="11.1"  text-anchor="start" xml:space="preserve">S11 Xs live</text><text transform="translate(1605.00 127.50) scale(0.8739 1)" fill="#dcdcdc" font-size="11.1" font-weight="bold" text-anchor="start" xml:space="preserve">Marker 1, live</text><text transform="translate(1605.00 140.00) scale(0.8739 1)" fill="#dcdcdc" font-size="11.1"  text-anchor="start" xml:space="preserve">Freq    7,736 MHz</text><text transform="translate(1605.00 152.50) scale(0.8739 1)" fill="#dcdcdc" font-size="11.1"  text-anchor="start" xml:space="preserve">Rs      50,69 Ohm</text><text transform="translate(1605.00 165.00) scale(0.8739 1)" fill="#dcdcdc" font-size="11.1"  text-anchor="start" xml:space="preserve">Xs      0,08973 Ohm</text><text transform="translate(1605.00 183.50) scale(0.8739 1)" fill="#dcdcdc" font-size="11.1" font-weight="bold" text-anchor="start" xml:space="preserve">Marker 2, live</text><text transform="translate(1605.00 196.00) scale(0.8739 1)" fill="#dcdcdc" font-size="11.1"  text-anchor="start" xml:space="preserve">Freq    23,076 MHz</text><text transform="translate(1605.00 208.50) scale(0.8739 1)" fill="#dcdcdc" font-size="11.1"  text-anchor="start" xml:space="preserve">Rs      45,93 Ohm</text><text transform="translate(1605.00 221.00) scale(0.8739 1)" fill="#dcdcdc" font-size="11.1"  text-anchor="start" xml:space="preserve">Xs      -0,2053 Ohm</text><text transform="translate(1605.00 239.50) scale(0.8739 1)" fill="#dcdcdc" font-size="11.1" font-weight="bold" text-anchor="start" xml:space="preserve">Marker 3, live</text><text transform="translate(1605.00 252.00) scale(0.8739 1)" fill="#dcdcdc" font-size="11.1"  text-anchor="start" xml:space="preserve">Freq    41,484 MHz</text><text transform="translate(1605.00 264.50) scale(0.8739 1)" fill="#dcdcdc" font-size="11.1"  text-anchor="start" xml:space="preserve">Rs      54,39 Ohm</text><text transform="translate(1605.00 277.00) scale(0.8739 1)" fill="#dcdcdc" font-size="11.1"  text-anchor="start" xml:space="preserve">Xs      0,1259 Ohm</text><text transform="translate(1605.00 295.50) scale(0.8739 1)" fill="#dcdcdc" font-size="11.1" font-weight="bold" text-anchor="start" xml:space="preserve">Marker 4, live</text><text transform="translate(1605.00 308.00) scale(0.8739 1)" fill="#dcdcdc" font-size="11.1"  text-anchor="start" xml:space="preserve">Freq    55,29 MHz</text><text transform="translate(1605.00 320.50) scale(0.8739 1)" fill="#dcdcdc" font-size="11.1"  text-anchor="start" xml:space="preserve">Rs      42,95 Ohm</text><text transform="translate(1605.00 333.00) scale(0.8739 1)" fill="#dcdcdc" font-size="11.1"  text-anchor="start" xml:space="preserve">Xs      -0,3001 Ohm</text><text transform="translate(1605.00 351.50) scale(0.8739 1)" fill="#dcdcdc" font-size="11.1" font-weight="bold" text-anchor="start" xml:space="preserve">Marker 5, live</text><text transform="translate(1605.00 364.00) scale(0.8739 1)" fill="#dcdcdc" font-size="11.1"  text-anchor="start" xml:space="preserve">Freq    74,465 MHz</text><text transform="translate(1605.00 376.50) scale(0.8739 1)" fill="#dcdcdc" font-size="11.1"  text-anchor="start" xml:space="preserve">Rs      58,07 Ohm</text><text transform="translate(1605.00 389.00) scale(0.8739 1)" fill="#dcdcdc" font-size="11.1"  text-anchor="start" xml:space="preserve">Xs      -0,4027 Ohm</text><text transform="translate(1605.00 407.50) scale(0.8739 1)" fill="#dcdcdc" font-size="11.1" font-weight="bold" text-anchor="start" xml:space="preserve">Marker 6, live</text><text transform="translate(1605.00 420.00) scale(0.8739 1)" fill="#dcdcdc" font-size="11.1"  text-anchor="start" xml:space="preserve">Freq    87,504 MHz</text><text transform="translate(1605.00 432.50) scale(0.8739 1)" fill="#dcdcdc" font-size="11.1"  text-anchor="start" xml:space="preserve">Rs      39,73 Ohm</text><text transform="translate(1605.00 445.00) scale(0.8739 1)" fill="#dcdcdc" font-size="11.1"  text-anchor="start" xml:space="preserve">Xs      -0,3819 Ohm</text><text transform="translate(1605.00 463.50) scale(0.8739 1)" fill="#dcdcdc" font-size="11.1" font-weight="bold" text-anchor="start" xml:space="preserve">Marker 7, live</text><text transform="translate(1605.00 476.00) scale(0.8739 1)" fill="#dcdcdc" font-size="11.1"  text-anchor="start" xml:space="preserve">Freq    107,446 MHz</text><text transform="translate(1605.00 488.50) scale(0.8739 1)" fill="#dcdcdc" font-size="11.1"  text-anchor="start" xml:space="preserve">Rs      64,02 Ohm</text><text transform="translate(1605.00 501.00) scale(0.8739 1)" fill="#dcdcdc" font-size="11.1"  text-anchor="start" xml:space="preserve">Xs      0,3370 Ohm</text><text transform="translate(1605.00 519.50) scale(0.8739 1)" fill="#dcdcdc" font-size="11.1" font-weight="bold" text-anchor="start" xml:space="preserve">Marker 8, live</text><text transform="translate(1605.00 532.00) scale(0.8739 1)" fill="#dcdcdc" font-size="11.1"  text-anchor="start" xml:space="preserve">Freq    120,485 MHz</text><text transform="translate(1605.00 544.50) scale(0.8739 1)" fill="#dcdcdc" font-size="11.1"  text-anchor="start" xml:space="preserve">Rs      37,88 Ohm</text><text transform="translate(1605.00 557.00) scale(0.8739 1)" fill="#dcdcdc" font-size="11.1"  text-anchor="start" xml:space="preserve">Xs      -0,4065 Ohm</text><text transform="translate(1605.00 575.50) scale(0.8739 1)" fill="#dcdcdc" font-size="11.1" font-weight="bold" text-anchor="start" xml:space="preserve">Marker 9, live</text><text transform="translate(1605.00 588.00) scale(0.8739 1)" fill="#dcdcdc" font-size="11.1"  text-anchor="start" xml:space="preserve">Freq    140,427 MHz</text><text transform="translate(1605.00 600.50) scale(0.8739 1)" fill="#dcdcdc" font-size="11.1"  text-anchor="start" xml:space="preserve">Rs      69,08 Ohm</text><text transform="translate(1605.00 613.00) scale(0.8739 1)" fill="#dcdcdc" font-size="11.1"  text-anchor="start" xml:space="preserve">Xs      0,05806 Ohm</text></svg></body></html>
